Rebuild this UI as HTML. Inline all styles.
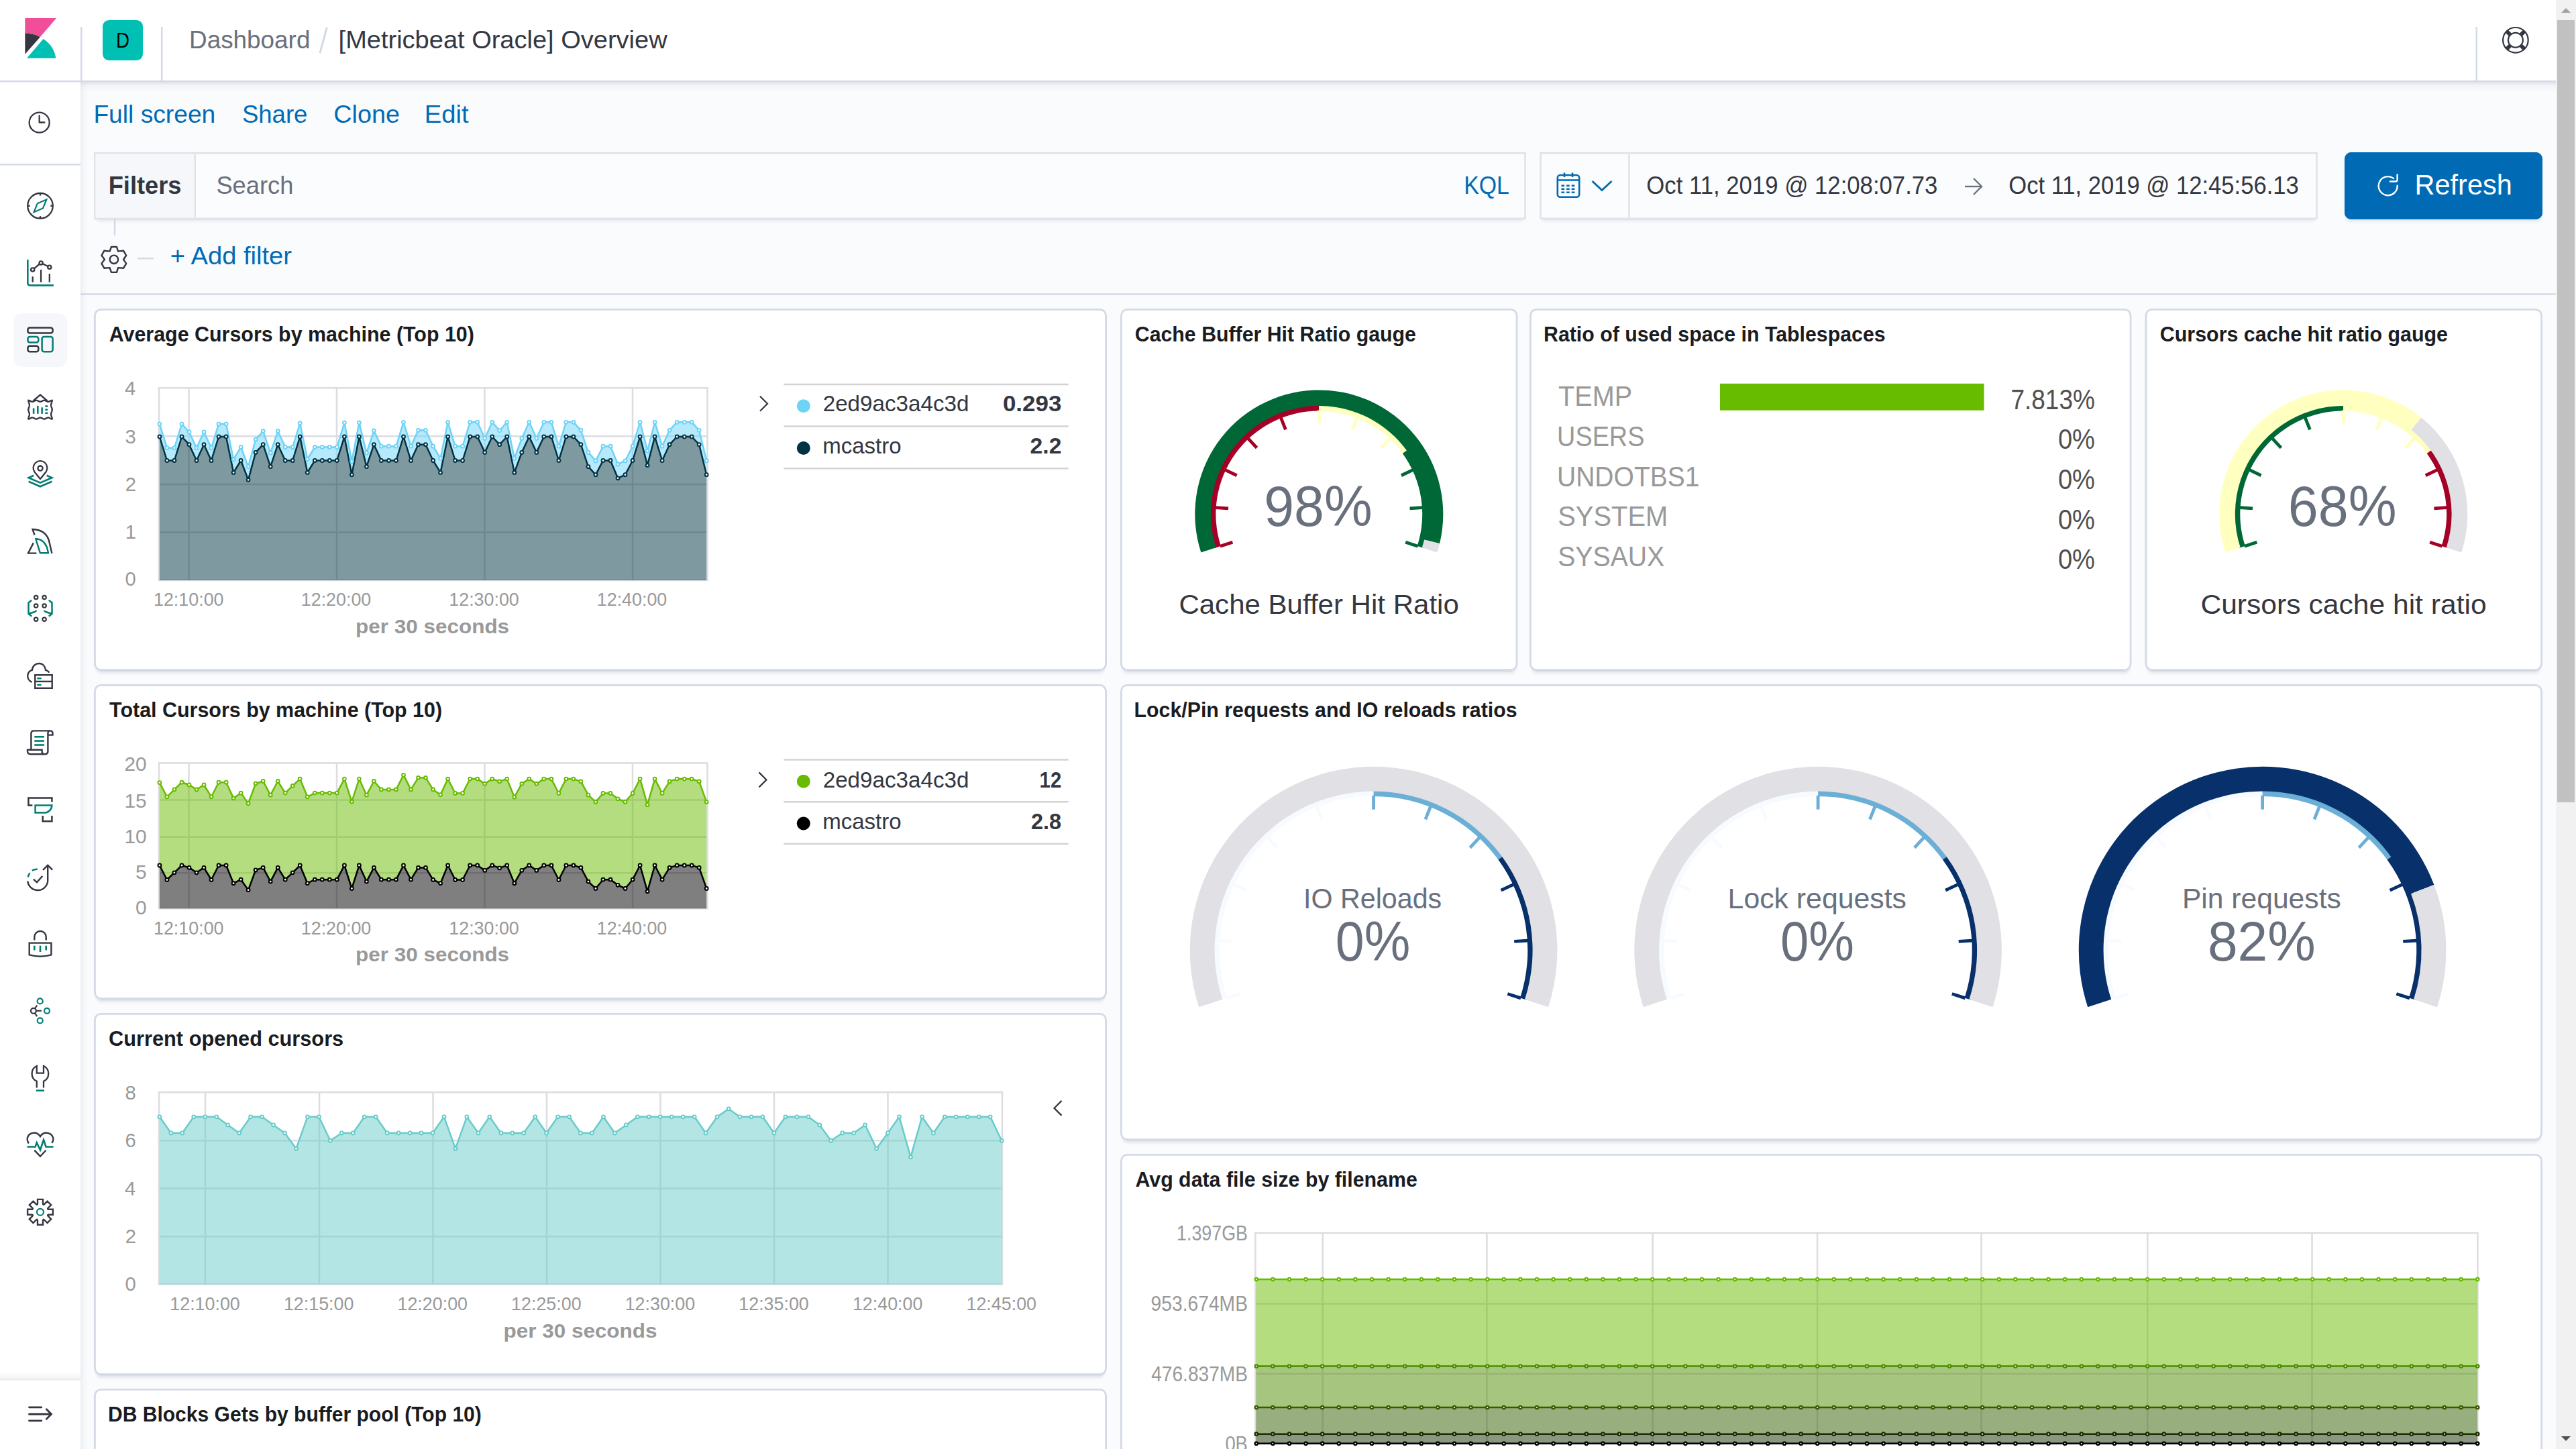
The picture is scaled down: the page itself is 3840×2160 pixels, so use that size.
<!DOCTYPE html>
<html><head><meta charset="utf-8"><title>[Metricbeat Oracle] Overview - Kibana</title>
<style>html,body{margin:0;padding:0;width:3840px;height:2160px;overflow:hidden;background:#FAFBFD}svg{display:block;position:absolute;left:0;top:0}.sh,.shf,.shb{position:absolute}.sh{border-radius:10px;background:#fff;box-shadow:0 2.5px 2.5px -2.5px rgba(152,162,179,.3),0 7.5px 5px -5px rgba(152,162,179,.3)}.shf{background:#FBFCFD;box-shadow:0 2.5px 2.5px -2.5px rgba(152,162,179,.2),0 7.5px 5px -5px rgba(152,162,179,.2)}.shb{border-radius:10px;background:#006BB4;box-shadow:0 5px 5px -2.5px rgba(152,162,179,.25)}text{font-family:"Liberation Sans",sans-serif}</style>
</head><body>
<div class="sh" style="left:140.00px;top:460.00px;width:1510.00px;height:540.00px"></div>
<div class="sh" style="left:1670.00px;top:460.00px;width:592.50px;height:540.00px"></div>
<div class="sh" style="left:2280.00px;top:460.00px;width:897.50px;height:540.00px"></div>
<div class="sh" style="left:3197.50px;top:460.00px;width:592.50px;height:540.00px"></div>
<div class="sh" style="left:140.00px;top:1020.00px;width:1510.00px;height:470.00px"></div>
<div class="sh" style="left:1670.00px;top:1020.00px;width:2120.00px;height:680.00px"></div>
<div class="sh" style="left:140.00px;top:1510.00px;width:1510.00px;height:540.00px"></div>
<div class="sh" style="left:1670.00px;top:1720.00px;width:2120.00px;height:680.00px"></div>
<div class="sh" style="left:140.00px;top:2070.00px;width:1510.00px;height:540.00px"></div>
<div class="shf" style="left:140px;top:227px;width:2134.7px;height:100px"></div>
<div class="shf" style="left:2295.25px;top:227px;width:1159.5px;height:100px"></div>
<div class="shb" style="left:3495px;top:227px;width:295px;height:100px"></div>
<svg xmlns="http://www.w3.org/2000/svg" width="3840" height="2160" viewBox="0 0 3840 2160">
<defs>
<filter id="pshadow" x="-5%" y="-5%" width="110%" height="115%"><feDropShadow dx="0" dy="4" stdDeviation="4" flood-color="#98A2B3" flood-opacity="0.22"/></filter>
<filter id="fshadow" x="-5%" y="-20%" width="110%" height="150%"><feDropShadow dx="0" dy="4" stdDeviation="2.5" flood-color="#98A2B3" flood-opacity="0.2"/></filter>
<filter id="hshadow" x="-5%" y="-20%" width="110%" height="160%"><feDropShadow dx="0" dy="6" stdDeviation="6" flood-color="#98A2B3" flood-opacity="0.2"/></filter>
<filter id="sshadow" x="-20%" y="-5%" width="160%" height="110%"><feDropShadow dx="6" dy="0" stdDeviation="6" flood-color="#98A2B3" flood-opacity="0.2"/></filter>
<linearGradient id="gshL" x1="0" y1="0" x2="1" y2="0"><stop offset="0" stop-color="#98A2B3" stop-opacity="0.2"/><stop offset="0.3" stop-color="#98A2B3" stop-opacity="0.07"/><stop offset="1" stop-color="#98A2B3" stop-opacity="0"/></linearGradient>
<linearGradient id="gshT" x1="0" y1="0" x2="0" y2="1"><stop offset="0" stop-color="#98A2B3" stop-opacity="0.3"/><stop offset="0.3" stop-color="#98A2B3" stop-opacity="0.1"/><stop offset="1" stop-color="#98A2B3" stop-opacity="0"/></linearGradient>
<linearGradient id="gshB" x1="0" y1="0" x2="0" y2="1"><stop offset="0" stop-color="#98A2B3" stop-opacity="0"/><stop offset="0.75" stop-color="#98A2B3" stop-opacity="0.1"/><stop offset="1" stop-color="#98A2B3" stop-opacity="0.25"/></linearGradient>
</defs>
<rect x="141.40" y="461.40" width="1507.20" height="537.20" rx="9" fill="#FFFFFF" stroke="#D3DAE6" stroke-width="2.8"/>
<text x="162.7" y="509.0" font-size="32.0" fill="#1A1C21" font-weight="bold" textLength="544.2" lengthAdjust="spacingAndGlyphs">Average Cursors by machine (Top 10)</text>
<rect x="1671.40" y="461.40" width="589.70" height="537.20" rx="9" fill="#FFFFFF" stroke="#D3DAE6" stroke-width="2.8"/>
<text x="1691.8" y="509.0" font-size="32.0" fill="#1A1C21" font-weight="bold" textLength="419.1" lengthAdjust="spacingAndGlyphs">Cache Buffer Hit Ratio gauge</text>
<rect x="2281.40" y="461.40" width="894.70" height="537.20" rx="9" fill="#FFFFFF" stroke="#D3DAE6" stroke-width="2.8"/>
<text x="2301.0" y="509.0" font-size="32.0" fill="#1A1C21" font-weight="bold" textLength="509.6" lengthAdjust="spacingAndGlyphs">Ratio of used space in Tablespaces</text>
<rect x="3198.90" y="461.40" width="589.70" height="537.20" rx="9" fill="#FFFFFF" stroke="#D3DAE6" stroke-width="2.8"/>
<text x="3219.8" y="509.0" font-size="32.0" fill="#1A1C21" font-weight="bold" textLength="429.2" lengthAdjust="spacingAndGlyphs">Cursors cache hit ratio gauge</text>
<rect x="141.40" y="1021.40" width="1507.20" height="467.20" rx="9" fill="#FFFFFF" stroke="#D3DAE6" stroke-width="2.8"/>
<text x="163.1" y="1069.0" font-size="32.0" fill="#1A1C21" font-weight="bold" textLength="496.0" lengthAdjust="spacingAndGlyphs">Total Cursors by machine (Top 10)</text>
<rect x="1671.40" y="1021.40" width="2117.20" height="677.20" rx="9" fill="#FFFFFF" stroke="#D3DAE6" stroke-width="2.8"/>
<text x="1690.5" y="1069.0" font-size="32.0" fill="#1A1C21" font-weight="bold" textLength="571.1" lengthAdjust="spacingAndGlyphs">Lock/Pin requests and IO reloads ratios</text>
<rect x="141.40" y="1511.40" width="1507.20" height="537.20" rx="9" fill="#FFFFFF" stroke="#D3DAE6" stroke-width="2.8"/>
<text x="162.1" y="1559.0" font-size="32.0" fill="#1A1C21" font-weight="bold" textLength="350.1" lengthAdjust="spacingAndGlyphs">Current opened cursors</text>
<rect x="1671.40" y="1721.40" width="2117.20" height="677.20" rx="9" fill="#FFFFFF" stroke="#D3DAE6" stroke-width="2.8"/>
<text x="1692.5" y="1769.0" font-size="32.0" fill="#1A1C21" font-weight="bold" textLength="420.3" lengthAdjust="spacingAndGlyphs">Avg data file size by filename</text>
<rect x="141.40" y="2071.40" width="1507.20" height="537.20" rx="9" fill="#FFFFFF" stroke="#D3DAE6" stroke-width="2.8"/>
<text x="161.0" y="2119.0" font-size="32.0" fill="#1A1C21" font-weight="bold" textLength="556.8" lengthAdjust="spacingAndGlyphs">DB Blocks Gets by buffer pool (Top 10)</text>
<line x1="237.0" y1="650.3" x2="1054.5" y2="650.3" stroke="#DCDCE1" stroke-width="2.5"/>
<line x1="237.0" y1="722.0" x2="1054.5" y2="722.0" stroke="#DCDCE1" stroke-width="2.5"/>
<line x1="237.0" y1="793.5" x2="1054.5" y2="793.5" stroke="#DCDCE1" stroke-width="2.5"/>
<line x1="281.5" y1="578.3" x2="281.5" y2="865.0" stroke="#DCDCE1" stroke-width="2.5"/>
<line x1="502.0" y1="578.3" x2="502.0" y2="865.0" stroke="#DCDCE1" stroke-width="2.5"/>
<line x1="722.5" y1="578.3" x2="722.5" y2="865.0" stroke="#DCDCE1" stroke-width="2.5"/>
<line x1="943.0" y1="578.3" x2="943.0" y2="865.0" stroke="#DCDCE1" stroke-width="2.5"/>
<rect x="237.0" y="578.3" width="817.5" height="286.7" fill="none" stroke="#DCDCE1" stroke-width="2.5"/>
<polygon points="237.9,651.0 248.9,686.5 259.9,686.5 271.0,651.0 282.0,662.7 293.0,686.5 304.0,662.7 315.0,686.5 326.0,651.0 337.1,651.0 348.1,704.4 359.1,686.5 370.1,715.3 381.1,674.4 392.2,662.7 403.2,695.6 414.2,662.7 425.2,686.5 436.2,686.5 447.2,651.0 458.3,704.4 469.3,686.5 480.3,686.5 491.3,686.5 502.3,686.5 513.4,651.0 524.4,707.7 535.4,651.0 546.4,695.6 557.4,662.7 568.4,686.5 579.5,686.5 590.5,686.5 601.5,651.0 612.5,686.5 623.5,662.7 634.5,662.7 645.6,686.5 656.6,704.4 667.6,651.0 678.6,686.5 689.6,686.5 700.7,651.0 711.7,651.0 722.7,674.4 733.7,651.0 744.7,662.7 755.7,651.0 766.8,704.4 777.8,674.4 788.8,651.0 799.8,674.4 810.8,651.0 821.9,651.0 832.9,686.5 843.9,651.0 854.9,651.0 865.9,662.7 876.9,695.6 888.0,707.7 899.0,686.5 910.0,686.5 921.0,712.8 932.0,707.7 943.1,686.5 954.1,651.0 965.1,693.6 976.1,651.0 987.1,686.5 998.1,662.7 1009.2,651.0 1020.2,651.0 1031.2,651.0 1042.2,662.7 1053.2,707.7 1053.2,865.0 237.9,865.0" fill="#003344" fill-opacity="0.5"/>
<polygon points="237.9,632.1 248.9,667.7 259.9,667.7 271.0,632.1 282.0,644.0 293.0,667.7 304.0,644.0 315.0,667.7 326.0,632.1 337.1,632.1 348.1,684.9 359.1,666.5 370.1,695.6 381.1,655.2 392.2,642.6 403.2,675.2 414.2,642.6 425.2,666.5 436.2,666.5 447.2,631.0 458.3,684.4 469.3,666.5 480.3,666.5 491.3,666.5 502.3,666.5 513.4,630.1 524.4,687.7 535.4,630.1 546.4,675.2 557.4,642.1 568.4,665.2 579.5,665.2 590.5,665.2 601.5,629.3 612.5,665.2 623.5,641.3 634.5,641.3 645.6,665.2 656.6,683.2 667.6,629.3 678.6,665.2 689.6,665.2 700.7,629.3 711.7,629.3 722.7,653.5 733.7,629.3 744.7,641.8 755.7,629.3 766.8,683.2 777.8,653.5 788.8,629.3 799.8,653.5 810.8,629.3 821.9,629.3 832.9,665.2 843.9,629.3 854.9,629.3 865.9,641.3 876.9,674.4 888.0,686.9 899.0,665.2 910.0,665.2 921.0,691.9 932.0,686.9 943.1,665.2 954.1,629.3 965.1,672.2 976.1,629.3 987.1,665.2 998.1,641.3 1009.2,629.3 1020.2,629.3 1031.2,629.3 1042.2,641.3 1053.2,686.9 1053.2,707.7 1042.2,662.7 1031.2,651.0 1020.2,651.0 1009.2,651.0 998.1,662.7 987.1,686.5 976.1,651.0 965.1,693.6 954.1,651.0 943.1,686.5 932.0,707.7 921.0,712.8 910.0,686.5 899.0,686.5 888.0,707.7 876.9,695.6 865.9,662.7 854.9,651.0 843.9,651.0 832.9,686.5 821.9,651.0 810.8,651.0 799.8,674.4 788.8,651.0 777.8,674.4 766.8,704.4 755.7,651.0 744.7,662.7 733.7,651.0 722.7,674.4 711.7,651.0 700.7,651.0 689.6,686.5 678.6,686.5 667.6,651.0 656.6,704.4 645.6,686.5 634.5,662.7 623.5,662.7 612.5,686.5 601.5,651.0 590.5,686.5 579.5,686.5 568.4,686.5 557.4,662.7 546.4,695.6 535.4,651.0 524.4,707.7 513.4,651.0 502.3,686.5 491.3,686.5 480.3,686.5 469.3,686.5 458.3,704.4 447.2,651.0 436.2,686.5 425.2,686.5 414.2,662.7 403.2,695.6 392.2,662.7 381.1,674.4 370.1,715.3 359.1,686.5 348.1,704.4 337.1,651.0 326.0,651.0 315.0,686.5 304.0,662.7 293.0,686.5 282.0,662.7 271.0,651.0 259.9,686.5 248.9,686.5 237.9,651.0" fill="#6DD3F7" fill-opacity="0.5"/>
<polyline points="237.9,632.1 248.9,667.7 259.9,667.7 271.0,632.1 282.0,644.0 293.0,667.7 304.0,644.0 315.0,667.7 326.0,632.1 337.1,632.1 348.1,684.9 359.1,666.5 370.1,695.6 381.1,655.2 392.2,642.6 403.2,675.2 414.2,642.6 425.2,666.5 436.2,666.5 447.2,631.0 458.3,684.4 469.3,666.5 480.3,666.5 491.3,666.5 502.3,666.5 513.4,630.1 524.4,687.7 535.4,630.1 546.4,675.2 557.4,642.1 568.4,665.2 579.5,665.2 590.5,665.2 601.5,629.3 612.5,665.2 623.5,641.3 634.5,641.3 645.6,665.2 656.6,683.2 667.6,629.3 678.6,665.2 689.6,665.2 700.7,629.3 711.7,629.3 722.7,653.5 733.7,629.3 744.7,641.8 755.7,629.3 766.8,683.2 777.8,653.5 788.8,629.3 799.8,653.5 810.8,629.3 821.9,629.3 832.9,665.2 843.9,629.3 854.9,629.3 865.9,641.3 876.9,674.4 888.0,686.9 899.0,665.2 910.0,665.2 921.0,691.9 932.0,686.9 943.1,665.2 954.1,629.3 965.1,672.2 976.1,629.3 987.1,665.2 998.1,641.3 1009.2,629.3 1020.2,629.3 1031.2,629.3 1042.2,641.3 1053.2,686.9" fill="none" stroke="#6DD3F7" stroke-width="2.5" stroke-linejoin="round"/>
<polyline points="237.9,651.0 248.9,686.5 259.9,686.5 271.0,651.0 282.0,662.7 293.0,686.5 304.0,662.7 315.0,686.5 326.0,651.0 337.1,651.0 348.1,704.4 359.1,686.5 370.1,715.3 381.1,674.4 392.2,662.7 403.2,695.6 414.2,662.7 425.2,686.5 436.2,686.5 447.2,651.0 458.3,704.4 469.3,686.5 480.3,686.5 491.3,686.5 502.3,686.5 513.4,651.0 524.4,707.7 535.4,651.0 546.4,695.6 557.4,662.7 568.4,686.5 579.5,686.5 590.5,686.5 601.5,651.0 612.5,686.5 623.5,662.7 634.5,662.7 645.6,686.5 656.6,704.4 667.6,651.0 678.6,686.5 689.6,686.5 700.7,651.0 711.7,651.0 722.7,674.4 733.7,651.0 744.7,662.7 755.7,651.0 766.8,704.4 777.8,674.4 788.8,651.0 799.8,674.4 810.8,651.0 821.9,651.0 832.9,686.5 843.9,651.0 854.9,651.0 865.9,662.7 876.9,695.6 888.0,707.7 899.0,686.5 910.0,686.5 921.0,712.8 932.0,707.7 943.1,686.5 954.1,651.0 965.1,693.6 976.1,651.0 987.1,686.5 998.1,662.7 1009.2,651.0 1020.2,651.0 1031.2,651.0 1042.2,662.7 1053.2,707.7" fill="none" stroke="#003344" stroke-width="2.5" stroke-linejoin="round"/>
<g fill="#FFFFFF" stroke="#6DD3F7" stroke-width="2.0"><circle cx="237.9" cy="632.1" r="2.4"/><circle cx="248.9" cy="667.7" r="2.4"/><circle cx="259.9" cy="667.7" r="2.4"/><circle cx="271.0" cy="632.1" r="2.4"/><circle cx="282.0" cy="644.0" r="2.4"/><circle cx="293.0" cy="667.7" r="2.4"/><circle cx="304.0" cy="644.0" r="2.4"/><circle cx="315.0" cy="667.7" r="2.4"/><circle cx="326.0" cy="632.1" r="2.4"/><circle cx="337.1" cy="632.1" r="2.4"/><circle cx="348.1" cy="684.9" r="2.4"/><circle cx="359.1" cy="666.5" r="2.4"/><circle cx="370.1" cy="695.6" r="2.4"/><circle cx="381.1" cy="655.2" r="2.4"/><circle cx="392.2" cy="642.6" r="2.4"/><circle cx="403.2" cy="675.2" r="2.4"/><circle cx="414.2" cy="642.6" r="2.4"/><circle cx="425.2" cy="666.5" r="2.4"/><circle cx="436.2" cy="666.5" r="2.4"/><circle cx="447.2" cy="631.0" r="2.4"/><circle cx="458.3" cy="684.4" r="2.4"/><circle cx="469.3" cy="666.5" r="2.4"/><circle cx="480.3" cy="666.5" r="2.4"/><circle cx="491.3" cy="666.5" r="2.4"/><circle cx="502.3" cy="666.5" r="2.4"/><circle cx="513.4" cy="630.1" r="2.4"/><circle cx="524.4" cy="687.7" r="2.4"/><circle cx="535.4" cy="630.1" r="2.4"/><circle cx="546.4" cy="675.2" r="2.4"/><circle cx="557.4" cy="642.1" r="2.4"/><circle cx="568.4" cy="665.2" r="2.4"/><circle cx="579.5" cy="665.2" r="2.4"/><circle cx="590.5" cy="665.2" r="2.4"/><circle cx="601.5" cy="629.3" r="2.4"/><circle cx="612.5" cy="665.2" r="2.4"/><circle cx="623.5" cy="641.3" r="2.4"/><circle cx="634.5" cy="641.3" r="2.4"/><circle cx="645.6" cy="665.2" r="2.4"/><circle cx="656.6" cy="683.2" r="2.4"/><circle cx="667.6" cy="629.3" r="2.4"/><circle cx="678.6" cy="665.2" r="2.4"/><circle cx="689.6" cy="665.2" r="2.4"/><circle cx="700.7" cy="629.3" r="2.4"/><circle cx="711.7" cy="629.3" r="2.4"/><circle cx="722.7" cy="653.5" r="2.4"/><circle cx="733.7" cy="629.3" r="2.4"/><circle cx="744.7" cy="641.8" r="2.4"/><circle cx="755.7" cy="629.3" r="2.4"/><circle cx="766.8" cy="683.2" r="2.4"/><circle cx="777.8" cy="653.5" r="2.4"/><circle cx="788.8" cy="629.3" r="2.4"/><circle cx="799.8" cy="653.5" r="2.4"/><circle cx="810.8" cy="629.3" r="2.4"/><circle cx="821.9" cy="629.3" r="2.4"/><circle cx="832.9" cy="665.2" r="2.4"/><circle cx="843.9" cy="629.3" r="2.4"/><circle cx="854.9" cy="629.3" r="2.4"/><circle cx="865.9" cy="641.3" r="2.4"/><circle cx="876.9" cy="674.4" r="2.4"/><circle cx="888.0" cy="686.9" r="2.4"/><circle cx="899.0" cy="665.2" r="2.4"/><circle cx="910.0" cy="665.2" r="2.4"/><circle cx="921.0" cy="691.9" r="2.4"/><circle cx="932.0" cy="686.9" r="2.4"/><circle cx="943.1" cy="665.2" r="2.4"/><circle cx="954.1" cy="629.3" r="2.4"/><circle cx="965.1" cy="672.2" r="2.4"/><circle cx="976.1" cy="629.3" r="2.4"/><circle cx="987.1" cy="665.2" r="2.4"/><circle cx="998.1" cy="641.3" r="2.4"/><circle cx="1009.2" cy="629.3" r="2.4"/><circle cx="1020.2" cy="629.3" r="2.4"/><circle cx="1031.2" cy="629.3" r="2.4"/><circle cx="1042.2" cy="641.3" r="2.4"/><circle cx="1053.2" cy="686.9" r="2.4"/></g>
<g fill="#FFFFFF" stroke="#003344" stroke-width="2.0"><circle cx="237.9" cy="651.0" r="2.4"/><circle cx="248.9" cy="686.5" r="2.4"/><circle cx="259.9" cy="686.5" r="2.4"/><circle cx="271.0" cy="651.0" r="2.4"/><circle cx="282.0" cy="662.7" r="2.4"/><circle cx="293.0" cy="686.5" r="2.4"/><circle cx="304.0" cy="662.7" r="2.4"/><circle cx="315.0" cy="686.5" r="2.4"/><circle cx="326.0" cy="651.0" r="2.4"/><circle cx="337.1" cy="651.0" r="2.4"/><circle cx="348.1" cy="704.4" r="2.4"/><circle cx="359.1" cy="686.5" r="2.4"/><circle cx="370.1" cy="715.3" r="2.4"/><circle cx="381.1" cy="674.4" r="2.4"/><circle cx="392.2" cy="662.7" r="2.4"/><circle cx="403.2" cy="695.6" r="2.4"/><circle cx="414.2" cy="662.7" r="2.4"/><circle cx="425.2" cy="686.5" r="2.4"/><circle cx="436.2" cy="686.5" r="2.4"/><circle cx="447.2" cy="651.0" r="2.4"/><circle cx="458.3" cy="704.4" r="2.4"/><circle cx="469.3" cy="686.5" r="2.4"/><circle cx="480.3" cy="686.5" r="2.4"/><circle cx="491.3" cy="686.5" r="2.4"/><circle cx="502.3" cy="686.5" r="2.4"/><circle cx="513.4" cy="651.0" r="2.4"/><circle cx="524.4" cy="707.7" r="2.4"/><circle cx="535.4" cy="651.0" r="2.4"/><circle cx="546.4" cy="695.6" r="2.4"/><circle cx="557.4" cy="662.7" r="2.4"/><circle cx="568.4" cy="686.5" r="2.4"/><circle cx="579.5" cy="686.5" r="2.4"/><circle cx="590.5" cy="686.5" r="2.4"/><circle cx="601.5" cy="651.0" r="2.4"/><circle cx="612.5" cy="686.5" r="2.4"/><circle cx="623.5" cy="662.7" r="2.4"/><circle cx="634.5" cy="662.7" r="2.4"/><circle cx="645.6" cy="686.5" r="2.4"/><circle cx="656.6" cy="704.4" r="2.4"/><circle cx="667.6" cy="651.0" r="2.4"/><circle cx="678.6" cy="686.5" r="2.4"/><circle cx="689.6" cy="686.5" r="2.4"/><circle cx="700.7" cy="651.0" r="2.4"/><circle cx="711.7" cy="651.0" r="2.4"/><circle cx="722.7" cy="674.4" r="2.4"/><circle cx="733.7" cy="651.0" r="2.4"/><circle cx="744.7" cy="662.7" r="2.4"/><circle cx="755.7" cy="651.0" r="2.4"/><circle cx="766.8" cy="704.4" r="2.4"/><circle cx="777.8" cy="674.4" r="2.4"/><circle cx="788.8" cy="651.0" r="2.4"/><circle cx="799.8" cy="674.4" r="2.4"/><circle cx="810.8" cy="651.0" r="2.4"/><circle cx="821.9" cy="651.0" r="2.4"/><circle cx="832.9" cy="686.5" r="2.4"/><circle cx="843.9" cy="651.0" r="2.4"/><circle cx="854.9" cy="651.0" r="2.4"/><circle cx="865.9" cy="662.7" r="2.4"/><circle cx="876.9" cy="695.6" r="2.4"/><circle cx="888.0" cy="707.7" r="2.4"/><circle cx="899.0" cy="686.5" r="2.4"/><circle cx="910.0" cy="686.5" r="2.4"/><circle cx="921.0" cy="712.8" r="2.4"/><circle cx="932.0" cy="707.7" r="2.4"/><circle cx="943.1" cy="686.5" r="2.4"/><circle cx="954.1" cy="651.0" r="2.4"/><circle cx="965.1" cy="693.6" r="2.4"/><circle cx="976.1" cy="651.0" r="2.4"/><circle cx="987.1" cy="686.5" r="2.4"/><circle cx="998.1" cy="662.7" r="2.4"/><circle cx="1009.2" cy="651.0" r="2.4"/><circle cx="1020.2" cy="651.0" r="2.4"/><circle cx="1031.2" cy="651.0" r="2.4"/><circle cx="1042.2" cy="662.7" r="2.4"/><circle cx="1053.2" cy="707.7" r="2.4"/></g>
<text x="186.1" y="589.0" font-size="29.1" fill="#999999" textLength="16.2" lengthAdjust="spacingAndGlyphs">4</text>
<text x="186.5" y="661.0" font-size="29.1" fill="#999999" textLength="16.2" lengthAdjust="spacingAndGlyphs">3</text>
<text x="186.7" y="732.0" font-size="29.1" fill="#999999" textLength="16.2" lengthAdjust="spacingAndGlyphs">2</text>
<text x="186.7" y="803.0" font-size="29.1" fill="#999999" textLength="16.2" lengthAdjust="spacingAndGlyphs">1</text>
<text x="186.4" y="873.0" font-size="29.1" fill="#999999" textLength="16.2" lengthAdjust="spacingAndGlyphs">0</text>
<text x="229.0" y="902.6" font-size="28.1" fill="#999999" textLength="104.5" lengthAdjust="spacingAndGlyphs">12:10:00</text>
<text x="448.8" y="902.6" font-size="28.1" fill="#999999" textLength="104.5" lengthAdjust="spacingAndGlyphs">12:20:00</text>
<text x="669.3" y="902.6" font-size="28.1" fill="#999999" textLength="104.5" lengthAdjust="spacingAndGlyphs">12:30:00</text>
<text x="889.8" y="902.6" font-size="28.1" fill="#999999" textLength="104.5" lengthAdjust="spacingAndGlyphs">12:40:00</text>
<text x="530.1" y="944.0" font-size="29.1" fill="#999999" font-weight="bold" textLength="229.0" lengthAdjust="spacingAndGlyphs">per 30 seconds</text>
<polyline points="1133.0,590.8 1144.0,601.8 1133.0,612.8" fill="none" stroke="#343741" stroke-width="2.2"/>
<line x1="1168.3" y1="572.9" x2="1592.7" y2="572.9" stroke="#D3D3D3" stroke-width="2.5"/>
<line x1="1168.3" y1="635.6" x2="1592.7" y2="635.6" stroke="#D3D3D3" stroke-width="2.5"/>
<line x1="1168.3" y1="698.3" x2="1592.7" y2="698.3" stroke="#D3D3D3" stroke-width="2.5"/>
<circle cx="1197.8" cy="605.2" r="10" fill="#6DD3F7"/>
<text x="1226.7" y="613.0" font-size="32.4" fill="#343741" textLength="217.8" lengthAdjust="spacingAndGlyphs">2ed9ac3a4c3d</text>
<text x="1494.9" y="613.0" font-size="32.4" fill="#343741" font-weight="bold" textLength="87.5" lengthAdjust="spacingAndGlyphs">0.293</text>
<circle cx="1197.8" cy="668.0" r="10" fill="#003344"/>
<text x="1226.2" y="675.7" font-size="32.4" fill="#343741" textLength="117.4" lengthAdjust="spacingAndGlyphs">mcastro</text>
<text x="1535.6" y="675.7" font-size="32.4" fill="#343741" font-weight="bold" textLength="46.9" lengthAdjust="spacingAndGlyphs">2.2</text>
<line x1="237.0" y1="1192.5" x2="1054.5" y2="1192.5" stroke="#DCDCE1" stroke-width="2.5"/>
<line x1="237.0" y1="1247.7" x2="1054.5" y2="1247.7" stroke="#DCDCE1" stroke-width="2.5"/>
<line x1="237.0" y1="1301.2" x2="1054.5" y2="1301.2" stroke="#DCDCE1" stroke-width="2.5"/>
<line x1="281.5" y1="1137.5" x2="281.5" y2="1354.3" stroke="#DCDCE1" stroke-width="2.5"/>
<line x1="502.0" y1="1137.5" x2="502.0" y2="1354.3" stroke="#DCDCE1" stroke-width="2.5"/>
<line x1="722.5" y1="1137.5" x2="722.5" y2="1354.3" stroke="#DCDCE1" stroke-width="2.5"/>
<line x1="943.0" y1="1137.5" x2="943.0" y2="1354.3" stroke="#DCDCE1" stroke-width="2.5"/>
<rect x="237.0" y="1137.5" width="817.5" height="216.8" fill="none" stroke="#DCDCE1" stroke-width="2.5"/>
<polygon points="237.9,1290.0 248.9,1311.5 259.9,1300.8 271.0,1290.0 282.0,1293.4 293.0,1300.8 304.0,1293.4 315.0,1311.5 326.0,1290.0 337.1,1290.0 348.1,1316.7 359.1,1311.2 370.1,1326.7 381.1,1296.9 392.2,1293.4 403.2,1314.1 414.2,1293.4 425.2,1311.2 436.2,1300.8 447.2,1290.0 458.3,1316.7 469.3,1311.2 480.3,1311.2 491.3,1311.2 502.3,1311.2 513.4,1290.0 524.4,1324.5 535.4,1290.0 546.4,1314.1 557.4,1293.4 568.4,1311.2 579.5,1311.2 590.5,1311.2 601.5,1290.0 612.5,1311.2 623.5,1293.4 634.5,1293.4 645.6,1311.5 656.6,1316.7 667.6,1290.0 678.6,1311.5 689.6,1311.5 700.7,1290.0 711.7,1290.0 722.7,1297.4 733.7,1290.0 744.7,1293.9 755.7,1290.0 766.8,1316.7 777.8,1297.4 788.8,1290.0 799.8,1297.4 810.8,1290.0 821.9,1290.0 832.9,1311.5 843.9,1290.0 854.9,1290.0 865.9,1293.4 876.9,1314.1 888.0,1324.5 899.0,1311.2 910.0,1311.2 921.0,1319.3 932.0,1324.5 943.1,1311.2 954.1,1290.0 965.1,1328.8 976.1,1290.0 987.1,1311.2 998.1,1293.4 1009.2,1290.0 1020.2,1290.0 1031.2,1290.0 1042.2,1293.4 1053.2,1324.5 1053.2,1354.3 237.9,1354.3" fill="#000000" fill-opacity="0.5"/>
<polygon points="237.9,1166.6 248.9,1187.8 259.9,1176.9 271.0,1166.2 282.0,1170.0 293.0,1176.9 304.0,1170.0 315.0,1187.8 326.0,1166.2 337.1,1166.2 348.1,1189.9 359.1,1182.1 370.1,1197.7 381.1,1168.0 392.2,1164.5 403.2,1185.2 414.2,1164.5 425.2,1182.1 436.2,1171.4 447.2,1161.1 458.3,1187.8 469.3,1182.1 480.3,1182.1 491.3,1182.1 502.3,1182.1 513.4,1161.1 524.4,1195.1 535.4,1161.1 546.4,1185.2 557.4,1164.5 568.4,1176.9 579.5,1176.9 590.5,1176.9 601.5,1155.4 612.5,1176.9 623.5,1159.3 634.5,1159.3 645.6,1176.9 656.6,1184.7 667.6,1161.1 678.6,1182.5 689.6,1182.5 700.7,1161.1 711.7,1161.1 722.7,1168.3 733.7,1161.1 744.7,1164.9 755.7,1161.1 766.8,1188.2 777.8,1168.3 788.8,1161.1 799.8,1168.3 810.8,1161.1 821.9,1161.1 832.9,1182.5 843.9,1161.1 854.9,1161.1 865.9,1164.9 876.9,1185.2 888.0,1195.4 899.0,1182.5 910.0,1182.5 921.0,1190.8 932.0,1195.4 943.1,1182.5 954.1,1161.1 965.1,1199.7 976.1,1161.1 987.1,1182.5 998.1,1164.9 1009.2,1161.1 1020.2,1161.1 1031.2,1161.1 1042.2,1164.9 1053.2,1195.4 1053.2,1324.5 1042.2,1293.4 1031.2,1290.0 1020.2,1290.0 1009.2,1290.0 998.1,1293.4 987.1,1311.2 976.1,1290.0 965.1,1328.8 954.1,1290.0 943.1,1311.2 932.0,1324.5 921.0,1319.3 910.0,1311.2 899.0,1311.2 888.0,1324.5 876.9,1314.1 865.9,1293.4 854.9,1290.0 843.9,1290.0 832.9,1311.5 821.9,1290.0 810.8,1290.0 799.8,1297.4 788.8,1290.0 777.8,1297.4 766.8,1316.7 755.7,1290.0 744.7,1293.9 733.7,1290.0 722.7,1297.4 711.7,1290.0 700.7,1290.0 689.6,1311.5 678.6,1311.5 667.6,1290.0 656.6,1316.7 645.6,1311.5 634.5,1293.4 623.5,1293.4 612.5,1311.2 601.5,1290.0 590.5,1311.2 579.5,1311.2 568.4,1311.2 557.4,1293.4 546.4,1314.1 535.4,1290.0 524.4,1324.5 513.4,1290.0 502.3,1311.2 491.3,1311.2 480.3,1311.2 469.3,1311.2 458.3,1316.7 447.2,1290.0 436.2,1300.8 425.2,1311.2 414.2,1293.4 403.2,1314.1 392.2,1293.4 381.1,1296.9 370.1,1326.7 359.1,1311.2 348.1,1316.7 337.1,1290.0 326.0,1290.0 315.0,1311.5 304.0,1293.4 293.0,1300.8 282.0,1293.4 271.0,1290.0 259.9,1300.8 248.9,1311.5 237.9,1290.0" fill="#68BC00" fill-opacity="0.5"/>
<polyline points="237.9,1166.6 248.9,1187.8 259.9,1176.9 271.0,1166.2 282.0,1170.0 293.0,1176.9 304.0,1170.0 315.0,1187.8 326.0,1166.2 337.1,1166.2 348.1,1189.9 359.1,1182.1 370.1,1197.7 381.1,1168.0 392.2,1164.5 403.2,1185.2 414.2,1164.5 425.2,1182.1 436.2,1171.4 447.2,1161.1 458.3,1187.8 469.3,1182.1 480.3,1182.1 491.3,1182.1 502.3,1182.1 513.4,1161.1 524.4,1195.1 535.4,1161.1 546.4,1185.2 557.4,1164.5 568.4,1176.9 579.5,1176.9 590.5,1176.9 601.5,1155.4 612.5,1176.9 623.5,1159.3 634.5,1159.3 645.6,1176.9 656.6,1184.7 667.6,1161.1 678.6,1182.5 689.6,1182.5 700.7,1161.1 711.7,1161.1 722.7,1168.3 733.7,1161.1 744.7,1164.9 755.7,1161.1 766.8,1188.2 777.8,1168.3 788.8,1161.1 799.8,1168.3 810.8,1161.1 821.9,1161.1 832.9,1182.5 843.9,1161.1 854.9,1161.1 865.9,1164.9 876.9,1185.2 888.0,1195.4 899.0,1182.5 910.0,1182.5 921.0,1190.8 932.0,1195.4 943.1,1182.5 954.1,1161.1 965.1,1199.7 976.1,1161.1 987.1,1182.5 998.1,1164.9 1009.2,1161.1 1020.2,1161.1 1031.2,1161.1 1042.2,1164.9 1053.2,1195.4" fill="none" stroke="#68BC00" stroke-width="2.5" stroke-linejoin="round"/>
<polyline points="237.9,1290.0 248.9,1311.5 259.9,1300.8 271.0,1290.0 282.0,1293.4 293.0,1300.8 304.0,1293.4 315.0,1311.5 326.0,1290.0 337.1,1290.0 348.1,1316.7 359.1,1311.2 370.1,1326.7 381.1,1296.9 392.2,1293.4 403.2,1314.1 414.2,1293.4 425.2,1311.2 436.2,1300.8 447.2,1290.0 458.3,1316.7 469.3,1311.2 480.3,1311.2 491.3,1311.2 502.3,1311.2 513.4,1290.0 524.4,1324.5 535.4,1290.0 546.4,1314.1 557.4,1293.4 568.4,1311.2 579.5,1311.2 590.5,1311.2 601.5,1290.0 612.5,1311.2 623.5,1293.4 634.5,1293.4 645.6,1311.5 656.6,1316.7 667.6,1290.0 678.6,1311.5 689.6,1311.5 700.7,1290.0 711.7,1290.0 722.7,1297.4 733.7,1290.0 744.7,1293.9 755.7,1290.0 766.8,1316.7 777.8,1297.4 788.8,1290.0 799.8,1297.4 810.8,1290.0 821.9,1290.0 832.9,1311.5 843.9,1290.0 854.9,1290.0 865.9,1293.4 876.9,1314.1 888.0,1324.5 899.0,1311.2 910.0,1311.2 921.0,1319.3 932.0,1324.5 943.1,1311.2 954.1,1290.0 965.1,1328.8 976.1,1290.0 987.1,1311.2 998.1,1293.4 1009.2,1290.0 1020.2,1290.0 1031.2,1290.0 1042.2,1293.4 1053.2,1324.5" fill="none" stroke="#000000" stroke-width="2.5" stroke-linejoin="round"/>
<g fill="#FFFFFF" stroke="#68BC00" stroke-width="2.0"><circle cx="237.9" cy="1166.6" r="2.4"/><circle cx="248.9" cy="1187.8" r="2.4"/><circle cx="259.9" cy="1176.9" r="2.4"/><circle cx="271.0" cy="1166.2" r="2.4"/><circle cx="282.0" cy="1170.0" r="2.4"/><circle cx="293.0" cy="1176.9" r="2.4"/><circle cx="304.0" cy="1170.0" r="2.4"/><circle cx="315.0" cy="1187.8" r="2.4"/><circle cx="326.0" cy="1166.2" r="2.4"/><circle cx="337.1" cy="1166.2" r="2.4"/><circle cx="348.1" cy="1189.9" r="2.4"/><circle cx="359.1" cy="1182.1" r="2.4"/><circle cx="370.1" cy="1197.7" r="2.4"/><circle cx="381.1" cy="1168.0" r="2.4"/><circle cx="392.2" cy="1164.5" r="2.4"/><circle cx="403.2" cy="1185.2" r="2.4"/><circle cx="414.2" cy="1164.5" r="2.4"/><circle cx="425.2" cy="1182.1" r="2.4"/><circle cx="436.2" cy="1171.4" r="2.4"/><circle cx="447.2" cy="1161.1" r="2.4"/><circle cx="458.3" cy="1187.8" r="2.4"/><circle cx="469.3" cy="1182.1" r="2.4"/><circle cx="480.3" cy="1182.1" r="2.4"/><circle cx="491.3" cy="1182.1" r="2.4"/><circle cx="502.3" cy="1182.1" r="2.4"/><circle cx="513.4" cy="1161.1" r="2.4"/><circle cx="524.4" cy="1195.1" r="2.4"/><circle cx="535.4" cy="1161.1" r="2.4"/><circle cx="546.4" cy="1185.2" r="2.4"/><circle cx="557.4" cy="1164.5" r="2.4"/><circle cx="568.4" cy="1176.9" r="2.4"/><circle cx="579.5" cy="1176.9" r="2.4"/><circle cx="590.5" cy="1176.9" r="2.4"/><circle cx="601.5" cy="1155.4" r="2.4"/><circle cx="612.5" cy="1176.9" r="2.4"/><circle cx="623.5" cy="1159.3" r="2.4"/><circle cx="634.5" cy="1159.3" r="2.4"/><circle cx="645.6" cy="1176.9" r="2.4"/><circle cx="656.6" cy="1184.7" r="2.4"/><circle cx="667.6" cy="1161.1" r="2.4"/><circle cx="678.6" cy="1182.5" r="2.4"/><circle cx="689.6" cy="1182.5" r="2.4"/><circle cx="700.7" cy="1161.1" r="2.4"/><circle cx="711.7" cy="1161.1" r="2.4"/><circle cx="722.7" cy="1168.3" r="2.4"/><circle cx="733.7" cy="1161.1" r="2.4"/><circle cx="744.7" cy="1164.9" r="2.4"/><circle cx="755.7" cy="1161.1" r="2.4"/><circle cx="766.8" cy="1188.2" r="2.4"/><circle cx="777.8" cy="1168.3" r="2.4"/><circle cx="788.8" cy="1161.1" r="2.4"/><circle cx="799.8" cy="1168.3" r="2.4"/><circle cx="810.8" cy="1161.1" r="2.4"/><circle cx="821.9" cy="1161.1" r="2.4"/><circle cx="832.9" cy="1182.5" r="2.4"/><circle cx="843.9" cy="1161.1" r="2.4"/><circle cx="854.9" cy="1161.1" r="2.4"/><circle cx="865.9" cy="1164.9" r="2.4"/><circle cx="876.9" cy="1185.2" r="2.4"/><circle cx="888.0" cy="1195.4" r="2.4"/><circle cx="899.0" cy="1182.5" r="2.4"/><circle cx="910.0" cy="1182.5" r="2.4"/><circle cx="921.0" cy="1190.8" r="2.4"/><circle cx="932.0" cy="1195.4" r="2.4"/><circle cx="943.1" cy="1182.5" r="2.4"/><circle cx="954.1" cy="1161.1" r="2.4"/><circle cx="965.1" cy="1199.7" r="2.4"/><circle cx="976.1" cy="1161.1" r="2.4"/><circle cx="987.1" cy="1182.5" r="2.4"/><circle cx="998.1" cy="1164.9" r="2.4"/><circle cx="1009.2" cy="1161.1" r="2.4"/><circle cx="1020.2" cy="1161.1" r="2.4"/><circle cx="1031.2" cy="1161.1" r="2.4"/><circle cx="1042.2" cy="1164.9" r="2.4"/><circle cx="1053.2" cy="1195.4" r="2.4"/></g>
<g fill="#FFFFFF" stroke="#000000" stroke-width="2.0"><circle cx="237.9" cy="1290.0" r="2.4"/><circle cx="248.9" cy="1311.5" r="2.4"/><circle cx="259.9" cy="1300.8" r="2.4"/><circle cx="271.0" cy="1290.0" r="2.4"/><circle cx="282.0" cy="1293.4" r="2.4"/><circle cx="293.0" cy="1300.8" r="2.4"/><circle cx="304.0" cy="1293.4" r="2.4"/><circle cx="315.0" cy="1311.5" r="2.4"/><circle cx="326.0" cy="1290.0" r="2.4"/><circle cx="337.1" cy="1290.0" r="2.4"/><circle cx="348.1" cy="1316.7" r="2.4"/><circle cx="359.1" cy="1311.2" r="2.4"/><circle cx="370.1" cy="1326.7" r="2.4"/><circle cx="381.1" cy="1296.9" r="2.4"/><circle cx="392.2" cy="1293.4" r="2.4"/><circle cx="403.2" cy="1314.1" r="2.4"/><circle cx="414.2" cy="1293.4" r="2.4"/><circle cx="425.2" cy="1311.2" r="2.4"/><circle cx="436.2" cy="1300.8" r="2.4"/><circle cx="447.2" cy="1290.0" r="2.4"/><circle cx="458.3" cy="1316.7" r="2.4"/><circle cx="469.3" cy="1311.2" r="2.4"/><circle cx="480.3" cy="1311.2" r="2.4"/><circle cx="491.3" cy="1311.2" r="2.4"/><circle cx="502.3" cy="1311.2" r="2.4"/><circle cx="513.4" cy="1290.0" r="2.4"/><circle cx="524.4" cy="1324.5" r="2.4"/><circle cx="535.4" cy="1290.0" r="2.4"/><circle cx="546.4" cy="1314.1" r="2.4"/><circle cx="557.4" cy="1293.4" r="2.4"/><circle cx="568.4" cy="1311.2" r="2.4"/><circle cx="579.5" cy="1311.2" r="2.4"/><circle cx="590.5" cy="1311.2" r="2.4"/><circle cx="601.5" cy="1290.0" r="2.4"/><circle cx="612.5" cy="1311.2" r="2.4"/><circle cx="623.5" cy="1293.4" r="2.4"/><circle cx="634.5" cy="1293.4" r="2.4"/><circle cx="645.6" cy="1311.5" r="2.4"/><circle cx="656.6" cy="1316.7" r="2.4"/><circle cx="667.6" cy="1290.0" r="2.4"/><circle cx="678.6" cy="1311.5" r="2.4"/><circle cx="689.6" cy="1311.5" r="2.4"/><circle cx="700.7" cy="1290.0" r="2.4"/><circle cx="711.7" cy="1290.0" r="2.4"/><circle cx="722.7" cy="1297.4" r="2.4"/><circle cx="733.7" cy="1290.0" r="2.4"/><circle cx="744.7" cy="1293.9" r="2.4"/><circle cx="755.7" cy="1290.0" r="2.4"/><circle cx="766.8" cy="1316.7" r="2.4"/><circle cx="777.8" cy="1297.4" r="2.4"/><circle cx="788.8" cy="1290.0" r="2.4"/><circle cx="799.8" cy="1297.4" r="2.4"/><circle cx="810.8" cy="1290.0" r="2.4"/><circle cx="821.9" cy="1290.0" r="2.4"/><circle cx="832.9" cy="1311.5" r="2.4"/><circle cx="843.9" cy="1290.0" r="2.4"/><circle cx="854.9" cy="1290.0" r="2.4"/><circle cx="865.9" cy="1293.4" r="2.4"/><circle cx="876.9" cy="1314.1" r="2.4"/><circle cx="888.0" cy="1324.5" r="2.4"/><circle cx="899.0" cy="1311.2" r="2.4"/><circle cx="910.0" cy="1311.2" r="2.4"/><circle cx="921.0" cy="1319.3" r="2.4"/><circle cx="932.0" cy="1324.5" r="2.4"/><circle cx="943.1" cy="1311.2" r="2.4"/><circle cx="954.1" cy="1290.0" r="2.4"/><circle cx="965.1" cy="1328.8" r="2.4"/><circle cx="976.1" cy="1290.0" r="2.4"/><circle cx="987.1" cy="1311.2" r="2.4"/><circle cx="998.1" cy="1293.4" r="2.4"/><circle cx="1009.2" cy="1290.0" r="2.4"/><circle cx="1020.2" cy="1290.0" r="2.4"/><circle cx="1031.2" cy="1290.0" r="2.4"/><circle cx="1042.2" cy="1293.4" r="2.4"/><circle cx="1053.2" cy="1324.5" r="2.4"/></g>
<text x="185.4" y="1149.2" font-size="29.8" fill="#999999" textLength="33.1" lengthAdjust="spacingAndGlyphs">20</text>
<text x="185.5" y="1204.2" font-size="29.8" fill="#999999" textLength="33.1" lengthAdjust="spacingAndGlyphs">15</text>
<text x="185.4" y="1257.2" font-size="29.8" fill="#999999" textLength="33.1" lengthAdjust="spacingAndGlyphs">10</text>
<text x="202.1" y="1310.2" font-size="29.8" fill="#999999" textLength="16.6" lengthAdjust="spacingAndGlyphs">5</text>
<text x="202.0" y="1363.2" font-size="29.8" fill="#999999" textLength="16.6" lengthAdjust="spacingAndGlyphs">0</text>
<text x="229.0" y="1393.4" font-size="28.1" fill="#999999" textLength="104.5" lengthAdjust="spacingAndGlyphs">12:10:00</text>
<text x="448.8" y="1393.4" font-size="28.1" fill="#999999" textLength="104.5" lengthAdjust="spacingAndGlyphs">12:20:00</text>
<text x="669.3" y="1393.4" font-size="28.1" fill="#999999" textLength="104.5" lengthAdjust="spacingAndGlyphs">12:30:00</text>
<text x="889.8" y="1393.4" font-size="28.1" fill="#999999" textLength="104.5" lengthAdjust="spacingAndGlyphs">12:40:00</text>
<text x="530.1" y="1433.0" font-size="29.1" fill="#999999" font-weight="bold" textLength="229.0" lengthAdjust="spacingAndGlyphs">per 30 seconds</text>
<polyline points="1131.5,1151.4 1142.5,1162.4 1131.5,1173.4" fill="none" stroke="#343741" stroke-width="2.2"/>
<line x1="1168.3" y1="1132.5" x2="1592.7" y2="1132.5" stroke="#D3D3D3" stroke-width="2.5"/>
<line x1="1168.3" y1="1195.2" x2="1592.7" y2="1195.2" stroke="#D3D3D3" stroke-width="2.5"/>
<line x1="1168.3" y1="1257.9" x2="1592.7" y2="1257.9" stroke="#D3D3D3" stroke-width="2.5"/>
<circle cx="1197.8" cy="1164.8" r="10" fill="#68BC00"/>
<text x="1226.7" y="1173.6" font-size="32.4" fill="#343741" textLength="217.8" lengthAdjust="spacingAndGlyphs">2ed9ac3a4c3d</text>
<text x="1549.6" y="1173.6" font-size="32.4" fill="#343741" font-weight="bold" textLength="32.7" lengthAdjust="spacingAndGlyphs">12</text>
<circle cx="1197.8" cy="1227.5" r="10" fill="#000000"/>
<text x="1226.2" y="1236.3" font-size="32.4" fill="#343741" textLength="117.4" lengthAdjust="spacingAndGlyphs">mcastro</text>
<text x="1536.9" y="1236.3" font-size="32.4" fill="#343741" font-weight="bold" textLength="45.3" lengthAdjust="spacingAndGlyphs">2.8</text>
<line x1="237.0" y1="1700.3" x2="1494.0" y2="1700.3" stroke="#DCDCE1" stroke-width="2.5"/>
<line x1="237.0" y1="1771.8" x2="1494.0" y2="1771.8" stroke="#DCDCE1" stroke-width="2.5"/>
<line x1="237.0" y1="1843.2" x2="1494.0" y2="1843.2" stroke="#DCDCE1" stroke-width="2.5"/>
<line x1="306.0" y1="1628.3" x2="306.0" y2="1914.5" stroke="#DCDCE1" stroke-width="2.5"/>
<line x1="476.0" y1="1628.3" x2="476.0" y2="1914.5" stroke="#DCDCE1" stroke-width="2.5"/>
<line x1="645.5" y1="1628.3" x2="645.5" y2="1914.5" stroke="#DCDCE1" stroke-width="2.5"/>
<line x1="815.0" y1="1628.3" x2="815.0" y2="1914.5" stroke="#DCDCE1" stroke-width="2.5"/>
<line x1="984.5" y1="1628.3" x2="984.5" y2="1914.5" stroke="#DCDCE1" stroke-width="2.5"/>
<line x1="1154.0" y1="1628.3" x2="1154.0" y2="1914.5" stroke="#DCDCE1" stroke-width="2.5"/>
<line x1="1323.5" y1="1628.3" x2="1323.5" y2="1914.5" stroke="#DCDCE1" stroke-width="2.5"/>
<rect x="237.0" y="1628.3" width="1257.0" height="286.2" fill="none" stroke="#DCDCE1" stroke-width="2.5"/>
<polygon points="237.9,1664.8 254.9,1689.0 271.8,1689.0 288.8,1664.8 305.8,1664.8 322.7,1664.8 339.7,1676.9 356.6,1689.0 373.6,1664.8 390.6,1664.8 407.5,1676.9 424.5,1689.0 441.5,1712.2 458.4,1664.8 475.4,1664.8 492.3,1700.3 509.3,1689.0 526.3,1689.0 543.2,1664.8 560.2,1664.8 577.2,1689.0 594.1,1689.0 611.1,1689.0 628.0,1689.0 645.0,1689.0 662.0,1664.8 678.9,1712.2 695.9,1664.8 712.9,1689.0 729.8,1664.8 746.8,1689.0 763.8,1689.0 780.7,1689.0 797.7,1664.8 814.6,1689.0 831.6,1664.8 848.6,1664.8 865.5,1689.0 882.5,1689.0 899.5,1664.8 916.4,1689.0 933.4,1676.9 950.3,1664.8 967.3,1664.8 984.3,1664.8 1001.2,1664.8 1018.2,1664.8 1035.2,1664.8 1052.1,1689.0 1069.1,1664.8 1086.1,1652.9 1103.0,1664.8 1120.0,1664.8 1136.9,1664.8 1153.9,1689.0 1170.9,1664.8 1187.8,1664.8 1204.8,1664.8 1221.8,1676.9 1238.7,1700.3 1255.7,1689.0 1272.6,1689.0 1289.6,1676.9 1306.6,1712.2 1323.5,1689.0 1340.5,1664.8 1357.5,1724.8 1374.4,1664.8 1391.4,1689.0 1408.3,1664.8 1425.3,1664.8 1442.3,1664.8 1459.2,1664.8 1476.2,1664.8 1493.2,1700.3 1493.2,1914.5 237.9,1914.5" fill="#68CCCA" fill-opacity="0.5"/>
<polyline points="237.9,1664.8 254.9,1689.0 271.8,1689.0 288.8,1664.8 305.8,1664.8 322.7,1664.8 339.7,1676.9 356.6,1689.0 373.6,1664.8 390.6,1664.8 407.5,1676.9 424.5,1689.0 441.5,1712.2 458.4,1664.8 475.4,1664.8 492.3,1700.3 509.3,1689.0 526.3,1689.0 543.2,1664.8 560.2,1664.8 577.2,1689.0 594.1,1689.0 611.1,1689.0 628.0,1689.0 645.0,1689.0 662.0,1664.8 678.9,1712.2 695.9,1664.8 712.9,1689.0 729.8,1664.8 746.8,1689.0 763.8,1689.0 780.7,1689.0 797.7,1664.8 814.6,1689.0 831.6,1664.8 848.6,1664.8 865.5,1689.0 882.5,1689.0 899.5,1664.8 916.4,1689.0 933.4,1676.9 950.3,1664.8 967.3,1664.8 984.3,1664.8 1001.2,1664.8 1018.2,1664.8 1035.2,1664.8 1052.1,1689.0 1069.1,1664.8 1086.1,1652.9 1103.0,1664.8 1120.0,1664.8 1136.9,1664.8 1153.9,1689.0 1170.9,1664.8 1187.8,1664.8 1204.8,1664.8 1221.8,1676.9 1238.7,1700.3 1255.7,1689.0 1272.6,1689.0 1289.6,1676.9 1306.6,1712.2 1323.5,1689.0 1340.5,1664.8 1357.5,1724.8 1374.4,1664.8 1391.4,1689.0 1408.3,1664.8 1425.3,1664.8 1442.3,1664.8 1459.2,1664.8 1476.2,1664.8 1493.2,1700.3" fill="none" stroke="#68CCCA" stroke-width="2.5" stroke-linejoin="round"/>
<g fill="#FFFFFF" stroke="#68CCCA" stroke-width="2.0"><circle cx="237.9" cy="1664.8" r="2.4"/><circle cx="254.9" cy="1689.0" r="2.4"/><circle cx="271.8" cy="1689.0" r="2.4"/><circle cx="288.8" cy="1664.8" r="2.4"/><circle cx="305.8" cy="1664.8" r="2.4"/><circle cx="322.7" cy="1664.8" r="2.4"/><circle cx="339.7" cy="1676.9" r="2.4"/><circle cx="356.6" cy="1689.0" r="2.4"/><circle cx="373.6" cy="1664.8" r="2.4"/><circle cx="390.6" cy="1664.8" r="2.4"/><circle cx="407.5" cy="1676.9" r="2.4"/><circle cx="424.5" cy="1689.0" r="2.4"/><circle cx="441.5" cy="1712.2" r="2.4"/><circle cx="458.4" cy="1664.8" r="2.4"/><circle cx="475.4" cy="1664.8" r="2.4"/><circle cx="492.3" cy="1700.3" r="2.4"/><circle cx="509.3" cy="1689.0" r="2.4"/><circle cx="526.3" cy="1689.0" r="2.4"/><circle cx="543.2" cy="1664.8" r="2.4"/><circle cx="560.2" cy="1664.8" r="2.4"/><circle cx="577.2" cy="1689.0" r="2.4"/><circle cx="594.1" cy="1689.0" r="2.4"/><circle cx="611.1" cy="1689.0" r="2.4"/><circle cx="628.0" cy="1689.0" r="2.4"/><circle cx="645.0" cy="1689.0" r="2.4"/><circle cx="662.0" cy="1664.8" r="2.4"/><circle cx="678.9" cy="1712.2" r="2.4"/><circle cx="695.9" cy="1664.8" r="2.4"/><circle cx="712.9" cy="1689.0" r="2.4"/><circle cx="729.8" cy="1664.8" r="2.4"/><circle cx="746.8" cy="1689.0" r="2.4"/><circle cx="763.8" cy="1689.0" r="2.4"/><circle cx="780.7" cy="1689.0" r="2.4"/><circle cx="797.7" cy="1664.8" r="2.4"/><circle cx="814.6" cy="1689.0" r="2.4"/><circle cx="831.6" cy="1664.8" r="2.4"/><circle cx="848.6" cy="1664.8" r="2.4"/><circle cx="865.5" cy="1689.0" r="2.4"/><circle cx="882.5" cy="1689.0" r="2.4"/><circle cx="899.5" cy="1664.8" r="2.4"/><circle cx="916.4" cy="1689.0" r="2.4"/><circle cx="933.4" cy="1676.9" r="2.4"/><circle cx="950.3" cy="1664.8" r="2.4"/><circle cx="967.3" cy="1664.8" r="2.4"/><circle cx="984.3" cy="1664.8" r="2.4"/><circle cx="1001.2" cy="1664.8" r="2.4"/><circle cx="1018.2" cy="1664.8" r="2.4"/><circle cx="1035.2" cy="1664.8" r="2.4"/><circle cx="1052.1" cy="1689.0" r="2.4"/><circle cx="1069.1" cy="1664.8" r="2.4"/><circle cx="1086.1" cy="1652.9" r="2.4"/><circle cx="1103.0" cy="1664.8" r="2.4"/><circle cx="1120.0" cy="1664.8" r="2.4"/><circle cx="1136.9" cy="1664.8" r="2.4"/><circle cx="1153.9" cy="1689.0" r="2.4"/><circle cx="1170.9" cy="1664.8" r="2.4"/><circle cx="1187.8" cy="1664.8" r="2.4"/><circle cx="1204.8" cy="1664.8" r="2.4"/><circle cx="1221.8" cy="1676.9" r="2.4"/><circle cx="1238.7" cy="1700.3" r="2.4"/><circle cx="1255.7" cy="1689.0" r="2.4"/><circle cx="1272.6" cy="1689.0" r="2.4"/><circle cx="1289.6" cy="1676.9" r="2.4"/><circle cx="1306.6" cy="1712.2" r="2.4"/><circle cx="1323.5" cy="1689.0" r="2.4"/><circle cx="1340.5" cy="1664.8" r="2.4"/><circle cx="1357.5" cy="1724.8" r="2.4"/><circle cx="1374.4" cy="1664.8" r="2.4"/><circle cx="1391.4" cy="1689.0" r="2.4"/><circle cx="1408.3" cy="1664.8" r="2.4"/><circle cx="1425.3" cy="1664.8" r="2.4"/><circle cx="1442.3" cy="1664.8" r="2.4"/><circle cx="1459.2" cy="1664.8" r="2.4"/><circle cx="1476.2" cy="1664.8" r="2.4"/><circle cx="1493.2" cy="1700.3" r="2.4"/></g>
<text x="186.5" y="1639.0" font-size="29.1" fill="#999999" textLength="16.2" lengthAdjust="spacingAndGlyphs">8</text>
<text x="186.5" y="1710.0" font-size="29.1" fill="#999999" textLength="16.2" lengthAdjust="spacingAndGlyphs">6</text>
<text x="186.1" y="1781.5" font-size="29.1" fill="#999999" textLength="16.2" lengthAdjust="spacingAndGlyphs">4</text>
<text x="186.7" y="1853.0" font-size="29.1" fill="#999999" textLength="16.2" lengthAdjust="spacingAndGlyphs">2</text>
<text x="186.4" y="1924.0" font-size="29.1" fill="#999999" textLength="16.2" lengthAdjust="spacingAndGlyphs">0</text>
<text x="253.3" y="1952.6" font-size="28.1" fill="#999999" textLength="104.5" lengthAdjust="spacingAndGlyphs">12:10:00</text>
<text x="422.9" y="1952.6" font-size="28.1" fill="#999999" textLength="104.5" lengthAdjust="spacingAndGlyphs">12:15:00</text>
<text x="592.5" y="1952.6" font-size="28.1" fill="#999999" textLength="104.5" lengthAdjust="spacingAndGlyphs">12:20:00</text>
<text x="762.1" y="1952.6" font-size="28.1" fill="#999999" textLength="104.5" lengthAdjust="spacingAndGlyphs">12:25:00</text>
<text x="931.7" y="1952.6" font-size="28.1" fill="#999999" textLength="104.5" lengthAdjust="spacingAndGlyphs">12:30:00</text>
<text x="1101.3" y="1952.6" font-size="28.1" fill="#999999" textLength="104.5" lengthAdjust="spacingAndGlyphs">12:35:00</text>
<text x="1270.9" y="1952.6" font-size="28.1" fill="#999999" textLength="104.5" lengthAdjust="spacingAndGlyphs">12:40:00</text>
<text x="1440.5" y="1952.6" font-size="28.1" fill="#999999" textLength="104.5" lengthAdjust="spacingAndGlyphs">12:45:00</text>
<text x="750.5" y="1993.6" font-size="29.1" fill="#999999" font-weight="bold" textLength="229.0" lengthAdjust="spacingAndGlyphs">per 30 seconds</text>
<polyline points="1582.5,1640.9 1571.5,1651.9 1582.5,1662.9" fill="none" stroke="#343741" stroke-width="2.2"/>
<line x1="1871.4" y1="1943.4" x2="3693.4" y2="1943.4" stroke="#DCDCE1" stroke-width="2.5"/>
<line x1="1871.4" y1="2048.0" x2="3693.4" y2="2048.0" stroke="#DCDCE1" stroke-width="2.5"/>
<line x1="1971.7" y1="1838.0" x2="1971.7" y2="2152.8" stroke="#DCDCE1" stroke-width="2.5"/>
<line x1="2216.4" y1="1838.0" x2="2216.4" y2="2152.8" stroke="#DCDCE1" stroke-width="2.5"/>
<line x1="2463.6" y1="1838.0" x2="2463.6" y2="2152.8" stroke="#DCDCE1" stroke-width="2.5"/>
<line x1="2709.1" y1="1838.0" x2="2709.1" y2="2152.8" stroke="#DCDCE1" stroke-width="2.5"/>
<line x1="2953.5" y1="1838.0" x2="2953.5" y2="2152.8" stroke="#DCDCE1" stroke-width="2.5"/>
<line x1="3201.3" y1="1838.0" x2="3201.3" y2="2152.8" stroke="#DCDCE1" stroke-width="2.5"/>
<line x1="3446.5" y1="1838.0" x2="3446.5" y2="2152.8" stroke="#DCDCE1" stroke-width="2.5"/>
<rect x="1871.4" y="1838.0" width="1822.0" height="314.8" fill="none" stroke="#DCDCE1" stroke-width="2.5"/>
<rect x="1872.3" y="1907.1" width="1820.7" height="129.4" fill="#68BC00" fill-opacity="0.5"/>
<rect x="1872.3" y="2036.5" width="1820.7" height="61.5" fill="#4E8D00" fill-opacity="0.5"/>
<rect x="1872.3" y="2098.0" width="1820.7" height="39.7" fill="#345E00" fill-opacity="0.5"/>
<rect x="1872.3" y="2137.7" width="1820.7" height="14.1" fill="#1A2F00" fill-opacity="0.5"/>
<rect x="1872.3" y="2151.8" width="1820.7" height="1.0" fill="#000000" fill-opacity="0.5"/>
<polyline points="1872.8,1907.1 3693.2,1907.1" fill="none" stroke="#68BC00" stroke-width="2.5" stroke-linejoin="round"/>
<g fill="#FFFFFF" stroke="#68BC00" stroke-width="2.3"><circle cx="1872.8" cy="1907.1" r="2.2"/><circle cx="1897.4" cy="1907.1" r="2.2"/><circle cx="1922.0" cy="1907.1" r="2.2"/><circle cx="1946.6" cy="1907.1" r="2.2"/><circle cx="1971.2" cy="1907.1" r="2.2"/><circle cx="1995.8" cy="1907.1" r="2.2"/><circle cx="2020.4" cy="1907.1" r="2.2"/><circle cx="2045.0" cy="1907.1" r="2.2"/><circle cx="2069.6" cy="1907.1" r="2.2"/><circle cx="2094.2" cy="1907.1" r="2.2"/><circle cx="2118.8" cy="1907.1" r="2.2"/><circle cx="2143.4" cy="1907.1" r="2.2"/><circle cx="2168.0" cy="1907.1" r="2.2"/><circle cx="2192.6" cy="1907.1" r="2.2"/><circle cx="2217.2" cy="1907.1" r="2.2"/><circle cx="2241.8" cy="1907.1" r="2.2"/><circle cx="2266.4" cy="1907.1" r="2.2"/><circle cx="2291.0" cy="1907.1" r="2.2"/><circle cx="2315.6" cy="1907.1" r="2.2"/><circle cx="2340.2" cy="1907.1" r="2.2"/><circle cx="2364.8" cy="1907.1" r="2.2"/><circle cx="2389.4" cy="1907.1" r="2.2"/><circle cx="2414.0" cy="1907.1" r="2.2"/><circle cx="2438.6" cy="1907.1" r="2.2"/><circle cx="2463.2" cy="1907.1" r="2.2"/><circle cx="2487.8" cy="1907.1" r="2.2"/><circle cx="2512.4" cy="1907.1" r="2.2"/><circle cx="2537.0" cy="1907.1" r="2.2"/><circle cx="2561.6" cy="1907.1" r="2.2"/><circle cx="2586.2" cy="1907.1" r="2.2"/><circle cx="2610.8" cy="1907.1" r="2.2"/><circle cx="2635.4" cy="1907.1" r="2.2"/><circle cx="2660.0" cy="1907.1" r="2.2"/><circle cx="2684.6" cy="1907.1" r="2.2"/><circle cx="2709.2" cy="1907.1" r="2.2"/><circle cx="2733.8" cy="1907.1" r="2.2"/><circle cx="2758.4" cy="1907.1" r="2.2"/><circle cx="2783.0" cy="1907.1" r="2.2"/><circle cx="2807.6" cy="1907.1" r="2.2"/><circle cx="2832.2" cy="1907.1" r="2.2"/><circle cx="2856.8" cy="1907.1" r="2.2"/><circle cx="2881.4" cy="1907.1" r="2.2"/><circle cx="2906.0" cy="1907.1" r="2.2"/><circle cx="2930.6" cy="1907.1" r="2.2"/><circle cx="2955.2" cy="1907.1" r="2.2"/><circle cx="2979.8" cy="1907.1" r="2.2"/><circle cx="3004.4" cy="1907.1" r="2.2"/><circle cx="3029.0" cy="1907.1" r="2.2"/><circle cx="3053.6" cy="1907.1" r="2.2"/><circle cx="3078.2" cy="1907.1" r="2.2"/><circle cx="3102.8" cy="1907.1" r="2.2"/><circle cx="3127.4" cy="1907.1" r="2.2"/><circle cx="3152.0" cy="1907.1" r="2.2"/><circle cx="3176.6" cy="1907.1" r="2.2"/><circle cx="3201.2" cy="1907.1" r="2.2"/><circle cx="3225.8" cy="1907.1" r="2.2"/><circle cx="3250.4" cy="1907.1" r="2.2"/><circle cx="3275.0" cy="1907.1" r="2.2"/><circle cx="3299.6" cy="1907.1" r="2.2"/><circle cx="3324.2" cy="1907.1" r="2.2"/><circle cx="3348.8" cy="1907.1" r="2.2"/><circle cx="3373.4" cy="1907.1" r="2.2"/><circle cx="3398.0" cy="1907.1" r="2.2"/><circle cx="3422.6" cy="1907.1" r="2.2"/><circle cx="3447.2" cy="1907.1" r="2.2"/><circle cx="3471.8" cy="1907.1" r="2.2"/><circle cx="3496.4" cy="1907.1" r="2.2"/><circle cx="3521.0" cy="1907.1" r="2.2"/><circle cx="3545.6" cy="1907.1" r="2.2"/><circle cx="3570.2" cy="1907.1" r="2.2"/><circle cx="3594.8" cy="1907.1" r="2.2"/><circle cx="3619.4" cy="1907.1" r="2.2"/><circle cx="3644.0" cy="1907.1" r="2.2"/><circle cx="3668.6" cy="1907.1" r="2.2"/><circle cx="3693.2" cy="1907.1" r="2.2"/></g>
<polyline points="1872.8,2036.5 3693.2,2036.5" fill="none" stroke="#4E8D00" stroke-width="2.5" stroke-linejoin="round"/>
<g fill="#FFFFFF" stroke="#4E8D00" stroke-width="2.3"><circle cx="1872.8" cy="2036.5" r="2.2"/><circle cx="1897.4" cy="2036.5" r="2.2"/><circle cx="1922.0" cy="2036.5" r="2.2"/><circle cx="1946.6" cy="2036.5" r="2.2"/><circle cx="1971.2" cy="2036.5" r="2.2"/><circle cx="1995.8" cy="2036.5" r="2.2"/><circle cx="2020.4" cy="2036.5" r="2.2"/><circle cx="2045.0" cy="2036.5" r="2.2"/><circle cx="2069.6" cy="2036.5" r="2.2"/><circle cx="2094.2" cy="2036.5" r="2.2"/><circle cx="2118.8" cy="2036.5" r="2.2"/><circle cx="2143.4" cy="2036.5" r="2.2"/><circle cx="2168.0" cy="2036.5" r="2.2"/><circle cx="2192.6" cy="2036.5" r="2.2"/><circle cx="2217.2" cy="2036.5" r="2.2"/><circle cx="2241.8" cy="2036.5" r="2.2"/><circle cx="2266.4" cy="2036.5" r="2.2"/><circle cx="2291.0" cy="2036.5" r="2.2"/><circle cx="2315.6" cy="2036.5" r="2.2"/><circle cx="2340.2" cy="2036.5" r="2.2"/><circle cx="2364.8" cy="2036.5" r="2.2"/><circle cx="2389.4" cy="2036.5" r="2.2"/><circle cx="2414.0" cy="2036.5" r="2.2"/><circle cx="2438.6" cy="2036.5" r="2.2"/><circle cx="2463.2" cy="2036.5" r="2.2"/><circle cx="2487.8" cy="2036.5" r="2.2"/><circle cx="2512.4" cy="2036.5" r="2.2"/><circle cx="2537.0" cy="2036.5" r="2.2"/><circle cx="2561.6" cy="2036.5" r="2.2"/><circle cx="2586.2" cy="2036.5" r="2.2"/><circle cx="2610.8" cy="2036.5" r="2.2"/><circle cx="2635.4" cy="2036.5" r="2.2"/><circle cx="2660.0" cy="2036.5" r="2.2"/><circle cx="2684.6" cy="2036.5" r="2.2"/><circle cx="2709.2" cy="2036.5" r="2.2"/><circle cx="2733.8" cy="2036.5" r="2.2"/><circle cx="2758.4" cy="2036.5" r="2.2"/><circle cx="2783.0" cy="2036.5" r="2.2"/><circle cx="2807.6" cy="2036.5" r="2.2"/><circle cx="2832.2" cy="2036.5" r="2.2"/><circle cx="2856.8" cy="2036.5" r="2.2"/><circle cx="2881.4" cy="2036.5" r="2.2"/><circle cx="2906.0" cy="2036.5" r="2.2"/><circle cx="2930.6" cy="2036.5" r="2.2"/><circle cx="2955.2" cy="2036.5" r="2.2"/><circle cx="2979.8" cy="2036.5" r="2.2"/><circle cx="3004.4" cy="2036.5" r="2.2"/><circle cx="3029.0" cy="2036.5" r="2.2"/><circle cx="3053.6" cy="2036.5" r="2.2"/><circle cx="3078.2" cy="2036.5" r="2.2"/><circle cx="3102.8" cy="2036.5" r="2.2"/><circle cx="3127.4" cy="2036.5" r="2.2"/><circle cx="3152.0" cy="2036.5" r="2.2"/><circle cx="3176.6" cy="2036.5" r="2.2"/><circle cx="3201.2" cy="2036.5" r="2.2"/><circle cx="3225.8" cy="2036.5" r="2.2"/><circle cx="3250.4" cy="2036.5" r="2.2"/><circle cx="3275.0" cy="2036.5" r="2.2"/><circle cx="3299.6" cy="2036.5" r="2.2"/><circle cx="3324.2" cy="2036.5" r="2.2"/><circle cx="3348.8" cy="2036.5" r="2.2"/><circle cx="3373.4" cy="2036.5" r="2.2"/><circle cx="3398.0" cy="2036.5" r="2.2"/><circle cx="3422.6" cy="2036.5" r="2.2"/><circle cx="3447.2" cy="2036.5" r="2.2"/><circle cx="3471.8" cy="2036.5" r="2.2"/><circle cx="3496.4" cy="2036.5" r="2.2"/><circle cx="3521.0" cy="2036.5" r="2.2"/><circle cx="3545.6" cy="2036.5" r="2.2"/><circle cx="3570.2" cy="2036.5" r="2.2"/><circle cx="3594.8" cy="2036.5" r="2.2"/><circle cx="3619.4" cy="2036.5" r="2.2"/><circle cx="3644.0" cy="2036.5" r="2.2"/><circle cx="3668.6" cy="2036.5" r="2.2"/><circle cx="3693.2" cy="2036.5" r="2.2"/></g>
<polyline points="1872.8,2098.0 3693.2,2098.0" fill="none" stroke="#345E00" stroke-width="2.5" stroke-linejoin="round"/>
<g fill="#FFFFFF" stroke="#345E00" stroke-width="2.3"><circle cx="1872.8" cy="2098.0" r="2.2"/><circle cx="1897.4" cy="2098.0" r="2.2"/><circle cx="1922.0" cy="2098.0" r="2.2"/><circle cx="1946.6" cy="2098.0" r="2.2"/><circle cx="1971.2" cy="2098.0" r="2.2"/><circle cx="1995.8" cy="2098.0" r="2.2"/><circle cx="2020.4" cy="2098.0" r="2.2"/><circle cx="2045.0" cy="2098.0" r="2.2"/><circle cx="2069.6" cy="2098.0" r="2.2"/><circle cx="2094.2" cy="2098.0" r="2.2"/><circle cx="2118.8" cy="2098.0" r="2.2"/><circle cx="2143.4" cy="2098.0" r="2.2"/><circle cx="2168.0" cy="2098.0" r="2.2"/><circle cx="2192.6" cy="2098.0" r="2.2"/><circle cx="2217.2" cy="2098.0" r="2.2"/><circle cx="2241.8" cy="2098.0" r="2.2"/><circle cx="2266.4" cy="2098.0" r="2.2"/><circle cx="2291.0" cy="2098.0" r="2.2"/><circle cx="2315.6" cy="2098.0" r="2.2"/><circle cx="2340.2" cy="2098.0" r="2.2"/><circle cx="2364.8" cy="2098.0" r="2.2"/><circle cx="2389.4" cy="2098.0" r="2.2"/><circle cx="2414.0" cy="2098.0" r="2.2"/><circle cx="2438.6" cy="2098.0" r="2.2"/><circle cx="2463.2" cy="2098.0" r="2.2"/><circle cx="2487.8" cy="2098.0" r="2.2"/><circle cx="2512.4" cy="2098.0" r="2.2"/><circle cx="2537.0" cy="2098.0" r="2.2"/><circle cx="2561.6" cy="2098.0" r="2.2"/><circle cx="2586.2" cy="2098.0" r="2.2"/><circle cx="2610.8" cy="2098.0" r="2.2"/><circle cx="2635.4" cy="2098.0" r="2.2"/><circle cx="2660.0" cy="2098.0" r="2.2"/><circle cx="2684.6" cy="2098.0" r="2.2"/><circle cx="2709.2" cy="2098.0" r="2.2"/><circle cx="2733.8" cy="2098.0" r="2.2"/><circle cx="2758.4" cy="2098.0" r="2.2"/><circle cx="2783.0" cy="2098.0" r="2.2"/><circle cx="2807.6" cy="2098.0" r="2.2"/><circle cx="2832.2" cy="2098.0" r="2.2"/><circle cx="2856.8" cy="2098.0" r="2.2"/><circle cx="2881.4" cy="2098.0" r="2.2"/><circle cx="2906.0" cy="2098.0" r="2.2"/><circle cx="2930.6" cy="2098.0" r="2.2"/><circle cx="2955.2" cy="2098.0" r="2.2"/><circle cx="2979.8" cy="2098.0" r="2.2"/><circle cx="3004.4" cy="2098.0" r="2.2"/><circle cx="3029.0" cy="2098.0" r="2.2"/><circle cx="3053.6" cy="2098.0" r="2.2"/><circle cx="3078.2" cy="2098.0" r="2.2"/><circle cx="3102.8" cy="2098.0" r="2.2"/><circle cx="3127.4" cy="2098.0" r="2.2"/><circle cx="3152.0" cy="2098.0" r="2.2"/><circle cx="3176.6" cy="2098.0" r="2.2"/><circle cx="3201.2" cy="2098.0" r="2.2"/><circle cx="3225.8" cy="2098.0" r="2.2"/><circle cx="3250.4" cy="2098.0" r="2.2"/><circle cx="3275.0" cy="2098.0" r="2.2"/><circle cx="3299.6" cy="2098.0" r="2.2"/><circle cx="3324.2" cy="2098.0" r="2.2"/><circle cx="3348.8" cy="2098.0" r="2.2"/><circle cx="3373.4" cy="2098.0" r="2.2"/><circle cx="3398.0" cy="2098.0" r="2.2"/><circle cx="3422.6" cy="2098.0" r="2.2"/><circle cx="3447.2" cy="2098.0" r="2.2"/><circle cx="3471.8" cy="2098.0" r="2.2"/><circle cx="3496.4" cy="2098.0" r="2.2"/><circle cx="3521.0" cy="2098.0" r="2.2"/><circle cx="3545.6" cy="2098.0" r="2.2"/><circle cx="3570.2" cy="2098.0" r="2.2"/><circle cx="3594.8" cy="2098.0" r="2.2"/><circle cx="3619.4" cy="2098.0" r="2.2"/><circle cx="3644.0" cy="2098.0" r="2.2"/><circle cx="3668.6" cy="2098.0" r="2.2"/><circle cx="3693.2" cy="2098.0" r="2.2"/></g>
<polyline points="1872.8,2137.7 3693.2,2137.7" fill="none" stroke="#1A2F00" stroke-width="2.5" stroke-linejoin="round"/>
<g fill="#FFFFFF" stroke="#1A2F00" stroke-width="2.3"><circle cx="1872.8" cy="2137.7" r="2.2"/><circle cx="1897.4" cy="2137.7" r="2.2"/><circle cx="1922.0" cy="2137.7" r="2.2"/><circle cx="1946.6" cy="2137.7" r="2.2"/><circle cx="1971.2" cy="2137.7" r="2.2"/><circle cx="1995.8" cy="2137.7" r="2.2"/><circle cx="2020.4" cy="2137.7" r="2.2"/><circle cx="2045.0" cy="2137.7" r="2.2"/><circle cx="2069.6" cy="2137.7" r="2.2"/><circle cx="2094.2" cy="2137.7" r="2.2"/><circle cx="2118.8" cy="2137.7" r="2.2"/><circle cx="2143.4" cy="2137.7" r="2.2"/><circle cx="2168.0" cy="2137.7" r="2.2"/><circle cx="2192.6" cy="2137.7" r="2.2"/><circle cx="2217.2" cy="2137.7" r="2.2"/><circle cx="2241.8" cy="2137.7" r="2.2"/><circle cx="2266.4" cy="2137.7" r="2.2"/><circle cx="2291.0" cy="2137.7" r="2.2"/><circle cx="2315.6" cy="2137.7" r="2.2"/><circle cx="2340.2" cy="2137.7" r="2.2"/><circle cx="2364.8" cy="2137.7" r="2.2"/><circle cx="2389.4" cy="2137.7" r="2.2"/><circle cx="2414.0" cy="2137.7" r="2.2"/><circle cx="2438.6" cy="2137.7" r="2.2"/><circle cx="2463.2" cy="2137.7" r="2.2"/><circle cx="2487.8" cy="2137.7" r="2.2"/><circle cx="2512.4" cy="2137.7" r="2.2"/><circle cx="2537.0" cy="2137.7" r="2.2"/><circle cx="2561.6" cy="2137.7" r="2.2"/><circle cx="2586.2" cy="2137.7" r="2.2"/><circle cx="2610.8" cy="2137.7" r="2.2"/><circle cx="2635.4" cy="2137.7" r="2.2"/><circle cx="2660.0" cy="2137.7" r="2.2"/><circle cx="2684.6" cy="2137.7" r="2.2"/><circle cx="2709.2" cy="2137.7" r="2.2"/><circle cx="2733.8" cy="2137.7" r="2.2"/><circle cx="2758.4" cy="2137.7" r="2.2"/><circle cx="2783.0" cy="2137.7" r="2.2"/><circle cx="2807.6" cy="2137.7" r="2.2"/><circle cx="2832.2" cy="2137.7" r="2.2"/><circle cx="2856.8" cy="2137.7" r="2.2"/><circle cx="2881.4" cy="2137.7" r="2.2"/><circle cx="2906.0" cy="2137.7" r="2.2"/><circle cx="2930.6" cy="2137.7" r="2.2"/><circle cx="2955.2" cy="2137.7" r="2.2"/><circle cx="2979.8" cy="2137.7" r="2.2"/><circle cx="3004.4" cy="2137.7" r="2.2"/><circle cx="3029.0" cy="2137.7" r="2.2"/><circle cx="3053.6" cy="2137.7" r="2.2"/><circle cx="3078.2" cy="2137.7" r="2.2"/><circle cx="3102.8" cy="2137.7" r="2.2"/><circle cx="3127.4" cy="2137.7" r="2.2"/><circle cx="3152.0" cy="2137.7" r="2.2"/><circle cx="3176.6" cy="2137.7" r="2.2"/><circle cx="3201.2" cy="2137.7" r="2.2"/><circle cx="3225.8" cy="2137.7" r="2.2"/><circle cx="3250.4" cy="2137.7" r="2.2"/><circle cx="3275.0" cy="2137.7" r="2.2"/><circle cx="3299.6" cy="2137.7" r="2.2"/><circle cx="3324.2" cy="2137.7" r="2.2"/><circle cx="3348.8" cy="2137.7" r="2.2"/><circle cx="3373.4" cy="2137.7" r="2.2"/><circle cx="3398.0" cy="2137.7" r="2.2"/><circle cx="3422.6" cy="2137.7" r="2.2"/><circle cx="3447.2" cy="2137.7" r="2.2"/><circle cx="3471.8" cy="2137.7" r="2.2"/><circle cx="3496.4" cy="2137.7" r="2.2"/><circle cx="3521.0" cy="2137.7" r="2.2"/><circle cx="3545.6" cy="2137.7" r="2.2"/><circle cx="3570.2" cy="2137.7" r="2.2"/><circle cx="3594.8" cy="2137.7" r="2.2"/><circle cx="3619.4" cy="2137.7" r="2.2"/><circle cx="3644.0" cy="2137.7" r="2.2"/><circle cx="3668.6" cy="2137.7" r="2.2"/><circle cx="3693.2" cy="2137.7" r="2.2"/></g>
<polyline points="1872.8,2151.8 3693.2,2151.8" fill="none" stroke="#000000" stroke-width="2.5" stroke-linejoin="round"/>
<g fill="#FFFFFF" stroke="#000000" stroke-width="2.3"><circle cx="1872.8" cy="2151.8" r="2.2"/><circle cx="1897.4" cy="2151.8" r="2.2"/><circle cx="1922.0" cy="2151.8" r="2.2"/><circle cx="1946.6" cy="2151.8" r="2.2"/><circle cx="1971.2" cy="2151.8" r="2.2"/><circle cx="1995.8" cy="2151.8" r="2.2"/><circle cx="2020.4" cy="2151.8" r="2.2"/><circle cx="2045.0" cy="2151.8" r="2.2"/><circle cx="2069.6" cy="2151.8" r="2.2"/><circle cx="2094.2" cy="2151.8" r="2.2"/><circle cx="2118.8" cy="2151.8" r="2.2"/><circle cx="2143.4" cy="2151.8" r="2.2"/><circle cx="2168.0" cy="2151.8" r="2.2"/><circle cx="2192.6" cy="2151.8" r="2.2"/><circle cx="2217.2" cy="2151.8" r="2.2"/><circle cx="2241.8" cy="2151.8" r="2.2"/><circle cx="2266.4" cy="2151.8" r="2.2"/><circle cx="2291.0" cy="2151.8" r="2.2"/><circle cx="2315.6" cy="2151.8" r="2.2"/><circle cx="2340.2" cy="2151.8" r="2.2"/><circle cx="2364.8" cy="2151.8" r="2.2"/><circle cx="2389.4" cy="2151.8" r="2.2"/><circle cx="2414.0" cy="2151.8" r="2.2"/><circle cx="2438.6" cy="2151.8" r="2.2"/><circle cx="2463.2" cy="2151.8" r="2.2"/><circle cx="2487.8" cy="2151.8" r="2.2"/><circle cx="2512.4" cy="2151.8" r="2.2"/><circle cx="2537.0" cy="2151.8" r="2.2"/><circle cx="2561.6" cy="2151.8" r="2.2"/><circle cx="2586.2" cy="2151.8" r="2.2"/><circle cx="2610.8" cy="2151.8" r="2.2"/><circle cx="2635.4" cy="2151.8" r="2.2"/><circle cx="2660.0" cy="2151.8" r="2.2"/><circle cx="2684.6" cy="2151.8" r="2.2"/><circle cx="2709.2" cy="2151.8" r="2.2"/><circle cx="2733.8" cy="2151.8" r="2.2"/><circle cx="2758.4" cy="2151.8" r="2.2"/><circle cx="2783.0" cy="2151.8" r="2.2"/><circle cx="2807.6" cy="2151.8" r="2.2"/><circle cx="2832.2" cy="2151.8" r="2.2"/><circle cx="2856.8" cy="2151.8" r="2.2"/><circle cx="2881.4" cy="2151.8" r="2.2"/><circle cx="2906.0" cy="2151.8" r="2.2"/><circle cx="2930.6" cy="2151.8" r="2.2"/><circle cx="2955.2" cy="2151.8" r="2.2"/><circle cx="2979.8" cy="2151.8" r="2.2"/><circle cx="3004.4" cy="2151.8" r="2.2"/><circle cx="3029.0" cy="2151.8" r="2.2"/><circle cx="3053.6" cy="2151.8" r="2.2"/><circle cx="3078.2" cy="2151.8" r="2.2"/><circle cx="3102.8" cy="2151.8" r="2.2"/><circle cx="3127.4" cy="2151.8" r="2.2"/><circle cx="3152.0" cy="2151.8" r="2.2"/><circle cx="3176.6" cy="2151.8" r="2.2"/><circle cx="3201.2" cy="2151.8" r="2.2"/><circle cx="3225.8" cy="2151.8" r="2.2"/><circle cx="3250.4" cy="2151.8" r="2.2"/><circle cx="3275.0" cy="2151.8" r="2.2"/><circle cx="3299.6" cy="2151.8" r="2.2"/><circle cx="3324.2" cy="2151.8" r="2.2"/><circle cx="3348.8" cy="2151.8" r="2.2"/><circle cx="3373.4" cy="2151.8" r="2.2"/><circle cx="3398.0" cy="2151.8" r="2.2"/><circle cx="3422.6" cy="2151.8" r="2.2"/><circle cx="3447.2" cy="2151.8" r="2.2"/><circle cx="3471.8" cy="2151.8" r="2.2"/><circle cx="3496.4" cy="2151.8" r="2.2"/><circle cx="3521.0" cy="2151.8" r="2.2"/><circle cx="3545.6" cy="2151.8" r="2.2"/><circle cx="3570.2" cy="2151.8" r="2.2"/><circle cx="3594.8" cy="2151.8" r="2.2"/><circle cx="3619.4" cy="2151.8" r="2.2"/><circle cx="3644.0" cy="2151.8" r="2.2"/><circle cx="3668.6" cy="2151.8" r="2.2"/><circle cx="3693.2" cy="2151.8" r="2.2"/></g>
<text x="1754.0" y="1849.4" font-size="31.0" fill="#999999" textLength="106.0" lengthAdjust="spacingAndGlyphs">1.397GB</text>
<text x="1715.5" y="1954.0" font-size="31.0" fill="#999999" textLength="144.5" lengthAdjust="spacingAndGlyphs">953.674MB</text>
<text x="1716.2" y="2058.6" font-size="31.0" fill="#999999" textLength="143.8" lengthAdjust="spacingAndGlyphs">476.837MB</text>
<text x="1826.4" y="2163.2" font-size="31.0" fill="#999999" textLength="33.5" lengthAdjust="spacingAndGlyphs">0B</text>
<path d="M1809.95,817.20 A164.4,164.4 0 0 1 1966.30,602.00 L1966.30,612.50 A153.9,153.9 0 0 0 1819.93,813.96 Z" fill="#A50026"/>
<path d="M1966.30,602.00 A164.4,164.4 0 0 1 2099.30,669.77 L2090.81,675.94 A153.9,153.9 0 0 0 1966.30,612.50 Z" fill="#FFFFBF"/>
<path d="M2099.30,669.77 A164.4,164.4 0 0 1 2122.65,817.20 L2112.67,813.96 A153.9,153.9 0 0 0 2090.81,675.94 Z" fill="#006837"/>
<path d="M1790.35,823.57 A185,185 0 1 1 2146.05,810.15 L2123.12,804.57 A161.4,161.4 0 1 0 1812.80,816.28 Z" fill="#006837"/>
<path d="M2146.05,810.15 A185,185 0 0 1 2142.25,823.57 L2119.80,816.28 A161.4,161.4 0 0 0 2123.12,804.57 Z" fill="#E0E0E5"/>
<line x1="1818.98" y1="814.27" x2="1837.43" y2="808.27" stroke="#A50026" stroke-width="4.8"/>
<line x1="1811.71" y1="756.67" x2="1831.07" y2="757.89" stroke="#A50026" stroke-width="4.8"/>
<line x1="1826.14" y1="700.45" x2="1843.70" y2="708.71" stroke="#A50026" stroke-width="4.8"/>
<line x1="1860.26" y1="653.48" x2="1873.54" y2="667.62" stroke="#A50026" stroke-width="4.8"/>
<line x1="1909.28" y1="622.38" x2="1916.42" y2="640.42" stroke="#A50026" stroke-width="4.8"/>
<line x1="1966.30" y1="611.50" x2="1966.30" y2="630.90" stroke="#FFFFBF" stroke-width="4.8"/>
<line x1="2023.32" y1="622.38" x2="2016.18" y2="640.42" stroke="#FFFFBF" stroke-width="4.8"/>
<line x1="2072.34" y1="653.48" x2="2059.06" y2="667.62" stroke="#FFFFBF" stroke-width="4.8"/>
<line x1="2106.46" y1="700.45" x2="2088.90" y2="708.71" stroke="#006837" stroke-width="4.8"/>
<line x1="2120.89" y1="756.67" x2="2101.53" y2="757.89" stroke="#006837" stroke-width="4.8"/>
<line x1="2113.62" y1="814.27" x2="2095.17" y2="808.27" stroke="#006837" stroke-width="4.8"/>
<text x="1884.2" y="783.5" font-size="85.8" fill="#69707D" textLength="161.4" lengthAdjust="spacingAndGlyphs">98%</text>
<text x="1757.4" y="915.4" font-size="39.8" fill="#343741" textLength="417.4" lengthAdjust="spacingAndGlyphs">Cache Buffer Hit Ratio</text>
<path d="M3336.85,817.20 A164.4,164.4 0 0 1 3493.20,602.00 L3493.20,612.50 A153.9,153.9 0 0 0 3346.83,813.96 Z" fill="#006837"/>
<path d="M3493.20,602.00 A164.4,164.4 0 0 1 3626.20,669.77 L3617.71,675.94 A153.9,153.9 0 0 0 3493.20,612.50 Z" fill="#FFFFBF"/>
<path d="M3626.20,669.77 A164.4,164.4 0 0 1 3649.55,817.20 L3639.57,813.96 A153.9,153.9 0 0 0 3617.71,675.94 Z" fill="#A50026"/>
<path d="M3317.25,823.57 A185,185 0 0 1 3609.32,622.38 L3594.51,640.76 A161.4,161.4 0 0 0 3339.70,816.28 Z" fill="#FFFFBF"/>
<path d="M3609.32,622.38 A185,185 0 0 1 3669.15,823.57 L3646.70,816.28 A161.4,161.4 0 0 0 3594.51,640.76 Z" fill="#E0E0E5"/>
<line x1="3345.88" y1="814.27" x2="3364.33" y2="808.27" stroke="#006837" stroke-width="4.8"/>
<line x1="3338.61" y1="756.67" x2="3357.97" y2="757.89" stroke="#006837" stroke-width="4.8"/>
<line x1="3353.04" y1="700.45" x2="3370.60" y2="708.71" stroke="#006837" stroke-width="4.8"/>
<line x1="3387.16" y1="653.48" x2="3400.44" y2="667.62" stroke="#006837" stroke-width="4.8"/>
<line x1="3436.18" y1="622.38" x2="3443.32" y2="640.42" stroke="#006837" stroke-width="4.8"/>
<line x1="3493.20" y1="611.50" x2="3493.20" y2="630.90" stroke="#FFFFBF" stroke-width="4.8"/>
<line x1="3550.22" y1="622.38" x2="3543.08" y2="640.42" stroke="#FFFFBF" stroke-width="4.8"/>
<line x1="3599.24" y1="653.48" x2="3585.96" y2="667.62" stroke="#FFFFBF" stroke-width="4.8"/>
<line x1="3633.36" y1="700.45" x2="3615.80" y2="708.71" stroke="#A50026" stroke-width="4.8"/>
<line x1="3647.79" y1="756.67" x2="3628.43" y2="757.89" stroke="#A50026" stroke-width="4.8"/>
<line x1="3640.52" y1="814.27" x2="3622.07" y2="808.27" stroke="#A50026" stroke-width="4.8"/>
<text x="3410.8" y="783.5" font-size="85.8" fill="#69707D" textLength="161.7" lengthAdjust="spacingAndGlyphs">68%</text>
<text x="3280.4" y="915.4" font-size="39.8" fill="#343741" textLength="426.3" lengthAdjust="spacingAndGlyphs">Cursors cache hit ratio</text>
<path d="M1819.35,1490.76 A240.0,240.0 0 0 1 2047.60,1176.60 L2047.60,1186.90 A229.7,229.7 0 0 0 1829.14,1487.58 Z" fill="#F7FBFF"/>
<path d="M2047.60,1176.60 A240.0,240.0 0 0 1 2241.76,1275.53 L2233.43,1281.59 A229.7,229.7 0 0 0 2047.60,1186.90 Z" fill="#6BAED6"/>
<path d="M2241.76,1275.53 A240.0,240.0 0 0 1 2275.85,1490.76 L2266.06,1487.58 A229.7,229.7 0 0 0 2233.43,1281.59 Z" fill="#08306B"/>
<path d="M1787.20,1501.21 A273.8,273.8 0 0 1 1787.20,1501.21 L1822.20,1489.84 A237.0,237.0 0 0 0 1822.20,1489.84 Z" fill="#08306B"/>
<path d="M1787.20,1501.21 A273.8,273.8 0 1 1 2308.00,1501.21 L2273.00,1489.84 A237.0,237.0 0 1 0 1822.20,1489.84 Z" fill="#E0E0E5"/>
<line x1="1828.19" y1="1487.89" x2="1847.88" y2="1481.49" stroke="#F7FBFF" stroke-width="4.8"/>
<line x1="1817.36" y1="1402.11" x2="1838.01" y2="1403.41" stroke="#F7FBFF" stroke-width="4.8"/>
<line x1="1838.86" y1="1318.37" x2="1857.59" y2="1327.19" stroke="#F7FBFF" stroke-width="4.8"/>
<line x1="1889.67" y1="1248.43" x2="1903.85" y2="1263.52" stroke="#F7FBFF" stroke-width="4.8"/>
<line x1="1962.67" y1="1202.10" x2="1970.29" y2="1221.35" stroke="#F7FBFF" stroke-width="4.8"/>
<line x1="2047.60" y1="1185.90" x2="2047.60" y2="1206.60" stroke="#6BAED6" stroke-width="4.8"/>
<line x1="2132.53" y1="1202.10" x2="2124.91" y2="1221.35" stroke="#6BAED6" stroke-width="4.8"/>
<line x1="2205.53" y1="1248.43" x2="2191.35" y2="1263.52" stroke="#6BAED6" stroke-width="4.8"/>
<line x1="2256.34" y1="1318.37" x2="2237.61" y2="1327.19" stroke="#08306B" stroke-width="4.8"/>
<line x1="2277.84" y1="1402.11" x2="2257.19" y2="1403.41" stroke="#08306B" stroke-width="4.8"/>
<line x1="2267.01" y1="1487.89" x2="2247.32" y2="1481.49" stroke="#08306B" stroke-width="4.8"/>
<text x="1943.1" y="1354.1" font-size="42.2" fill="#69707D" textLength="206.1" lengthAdjust="spacingAndGlyphs">IO Reloads</text>
<text x="1990.8" y="1432.2" font-size="83.9" fill="#69707D" textLength="111.4" lengthAdjust="spacingAndGlyphs">0%</text>
<path d="M2481.85,1490.76 A240.0,240.0 0 0 1 2710.10,1176.60 L2710.10,1186.90 A229.7,229.7 0 0 0 2491.64,1487.58 Z" fill="#F7FBFF"/>
<path d="M2710.10,1176.60 A240.0,240.0 0 0 1 2904.26,1275.53 L2895.93,1281.59 A229.7,229.7 0 0 0 2710.10,1186.90 Z" fill="#6BAED6"/>
<path d="M2904.26,1275.53 A240.0,240.0 0 0 1 2938.35,1490.76 L2928.56,1487.58 A229.7,229.7 0 0 0 2895.93,1281.59 Z" fill="#08306B"/>
<path d="M2449.70,1501.21 A273.8,273.8 0 0 1 2449.70,1501.21 L2484.70,1489.84 A237.0,237.0 0 0 0 2484.70,1489.84 Z" fill="#08306B"/>
<path d="M2449.70,1501.21 A273.8,273.8 0 1 1 2970.50,1501.21 L2935.50,1489.84 A237.0,237.0 0 1 0 2484.70,1489.84 Z" fill="#E0E0E5"/>
<line x1="2490.69" y1="1487.89" x2="2510.38" y2="1481.49" stroke="#F7FBFF" stroke-width="4.8"/>
<line x1="2479.86" y1="1402.11" x2="2500.51" y2="1403.41" stroke="#F7FBFF" stroke-width="4.8"/>
<line x1="2501.36" y1="1318.37" x2="2520.09" y2="1327.19" stroke="#F7FBFF" stroke-width="4.8"/>
<line x1="2552.17" y1="1248.43" x2="2566.35" y2="1263.52" stroke="#F7FBFF" stroke-width="4.8"/>
<line x1="2625.17" y1="1202.10" x2="2632.79" y2="1221.35" stroke="#F7FBFF" stroke-width="4.8"/>
<line x1="2710.10" y1="1185.90" x2="2710.10" y2="1206.60" stroke="#6BAED6" stroke-width="4.8"/>
<line x1="2795.03" y1="1202.10" x2="2787.41" y2="1221.35" stroke="#6BAED6" stroke-width="4.8"/>
<line x1="2868.03" y1="1248.43" x2="2853.85" y2="1263.52" stroke="#6BAED6" stroke-width="4.8"/>
<line x1="2918.84" y1="1318.37" x2="2900.11" y2="1327.19" stroke="#08306B" stroke-width="4.8"/>
<line x1="2940.34" y1="1402.11" x2="2919.69" y2="1403.41" stroke="#08306B" stroke-width="4.8"/>
<line x1="2929.51" y1="1487.89" x2="2909.82" y2="1481.49" stroke="#08306B" stroke-width="4.8"/>
<text x="2575.6" y="1354.1" font-size="42.2" fill="#69707D" textLength="266.4" lengthAdjust="spacingAndGlyphs">Lock requests</text>
<text x="2654.0" y="1432.2" font-size="83.9" fill="#69707D" textLength="110.0" lengthAdjust="spacingAndGlyphs">0%</text>
<path d="M3144.35,1490.76 A240.0,240.0 0 0 1 3372.60,1176.60 L3372.60,1186.90 A229.7,229.7 0 0 0 3154.14,1487.58 Z" fill="#F7FBFF"/>
<path d="M3372.60,1176.60 A240.0,240.0 0 0 1 3566.76,1275.53 L3558.43,1281.59 A229.7,229.7 0 0 0 3372.60,1186.90 Z" fill="#6BAED6"/>
<path d="M3566.76,1275.53 A240.0,240.0 0 0 1 3600.85,1490.76 L3591.06,1487.58 A229.7,229.7 0 0 0 3558.43,1281.59 Z" fill="#08306B"/>
<path d="M3112.20,1501.21 A273.8,273.8 0 0 1 3628.42,1319.01 L3594.04,1332.13 A237.0,237.0 0 0 0 3147.20,1489.84 Z" fill="#08306B"/>
<path d="M3628.42,1319.01 A273.8,273.8 0 0 1 3633.00,1501.21 L3598.00,1489.84 A237.0,237.0 0 0 0 3594.04,1332.13 Z" fill="#E0E0E5"/>
<line x1="3153.19" y1="1487.89" x2="3172.88" y2="1481.49" stroke="#F7FBFF" stroke-width="4.8"/>
<line x1="3142.36" y1="1402.11" x2="3163.01" y2="1403.41" stroke="#F7FBFF" stroke-width="4.8"/>
<line x1="3163.86" y1="1318.37" x2="3182.59" y2="1327.19" stroke="#F7FBFF" stroke-width="4.8"/>
<line x1="3214.67" y1="1248.43" x2="3228.85" y2="1263.52" stroke="#F7FBFF" stroke-width="4.8"/>
<line x1="3287.67" y1="1202.10" x2="3295.29" y2="1221.35" stroke="#F7FBFF" stroke-width="4.8"/>
<line x1="3372.60" y1="1185.90" x2="3372.60" y2="1206.60" stroke="#6BAED6" stroke-width="4.8"/>
<line x1="3457.53" y1="1202.10" x2="3449.91" y2="1221.35" stroke="#6BAED6" stroke-width="4.8"/>
<line x1="3530.53" y1="1248.43" x2="3516.35" y2="1263.52" stroke="#6BAED6" stroke-width="4.8"/>
<line x1="3581.34" y1="1318.37" x2="3562.61" y2="1327.19" stroke="#08306B" stroke-width="4.8"/>
<line x1="3602.84" y1="1402.11" x2="3582.19" y2="1403.41" stroke="#08306B" stroke-width="4.8"/>
<line x1="3592.01" y1="1487.89" x2="3572.32" y2="1481.49" stroke="#08306B" stroke-width="4.8"/>
<text x="3252.9" y="1354.1" font-size="42.2" fill="#69707D" textLength="236.9" lengthAdjust="spacingAndGlyphs">Pin requests</text>
<text x="3290.9" y="1432.2" font-size="83.9" fill="#69707D" textLength="160.8" lengthAdjust="spacingAndGlyphs">82%</text>
<text x="2323.1" y="605.4" font-size="42.2" fill="#999999" textLength="110.0" lengthAdjust="spacingAndGlyphs">TEMP</text>
<text x="2997.4" y="609.8" font-size="42.2" fill="#505050" textLength="125.5" lengthAdjust="spacingAndGlyphs">7.813%</text>
<text x="2321.1" y="665.0" font-size="42.2" fill="#999999" textLength="130.3" lengthAdjust="spacingAndGlyphs">USERS</text>
<text x="3067.9" y="669.4" font-size="42.2" fill="#505050" textLength="55.0" lengthAdjust="spacingAndGlyphs">0%</text>
<text x="2321.0" y="724.6" font-size="42.2" fill="#999999" textLength="212.5" lengthAdjust="spacingAndGlyphs">UNDOTBS1</text>
<text x="3067.9" y="729.0" font-size="42.2" fill="#505050" textLength="55.0" lengthAdjust="spacingAndGlyphs">0%</text>
<text x="2322.2" y="784.2" font-size="42.2" fill="#999999" textLength="164.2" lengthAdjust="spacingAndGlyphs">SYSTEM</text>
<text x="3067.9" y="788.6" font-size="42.2" fill="#505050" textLength="55.0" lengthAdjust="spacingAndGlyphs">0%</text>
<text x="2322.2" y="843.8" font-size="42.2" fill="#999999" textLength="159.1" lengthAdjust="spacingAndGlyphs">SYSAUX</text>
<text x="3067.9" y="848.2" font-size="42.2" fill="#505050" textLength="55.0" lengthAdjust="spacingAndGlyphs">0%</text>
<rect x="2564" y="571.8" width="393.6" height="39.9" fill="#68BC00"/>
<text x="139.4" y="182.8" font-size="36.9" fill="#006BB4" textLength="181.9" lengthAdjust="spacingAndGlyphs">Full screen</text>
<text x="360.9" y="182.8" font-size="36.9" fill="#006BB4" textLength="97.5" lengthAdjust="spacingAndGlyphs">Share</text>
<text x="497.3" y="182.8" font-size="36.9" fill="#006BB4" textLength="98.6" lengthAdjust="spacingAndGlyphs">Clone</text>
<text x="632.8" y="182.8" font-size="36.9" fill="#006BB4" textLength="65.9" lengthAdjust="spacingAndGlyphs">Edit</text>
<rect x="141.25" y="228.25" width="2132.2" height="97.5" fill="#FBFCFD" stroke="#DFE2E6" stroke-width="2.5"/>
<rect x="142.5" y="229.5" width="147.5" height="95" fill="#F5F7FA"/>
<rect x="289.5" y="229.5" width="2.5" height="95" fill="#DFE2E6"/>
<text x="161.7" y="289.0" font-size="36.5" fill="#343741" font-weight="bold" textLength="108.8" lengthAdjust="spacingAndGlyphs">Filters</text>
<text x="322.4" y="289.0" font-size="36.9" fill="#69707D" textLength="115.0" lengthAdjust="spacingAndGlyphs">Search</text>
<text x="2182.2" y="289.0" font-size="36.9" fill="#006BB4" textLength="67.7" lengthAdjust="spacingAndGlyphs">KQL</text>
<rect x="2296.5" y="228.25" width="1157" height="97.5" fill="#FBFCFD" stroke="#DFE2E6" stroke-width="2.5"/>
<rect x="2427.2" y="229.5" width="2.5" height="95" fill="#DFE2E6"/>
<g fill="none" stroke="#006BB4" stroke-width="2.6"><rect x="2321.8" y="261" width="32.4" height="32.8" rx="4"/><line x1="2321.8" y1="268.5" x2="2354.2" y2="268.5"/><line x1="2332" y1="257.5" x2="2332" y2="264"/><line x1="2344" y1="257.5" x2="2344" y2="264"/></g>
<g fill="#006BB4"><rect x="2327.5" y="275.5" width="4.6" height="2.6"/><rect x="2335.1" y="275.5" width="4.6" height="2.6"/><rect x="2342.7" y="275.5" width="4.6" height="2.6"/><rect x="2327.5" y="280.5" width="4.6" height="2.6"/><rect x="2335.1" y="280.5" width="4.6" height="2.6"/><rect x="2342.7" y="280.5" width="4.6" height="2.6"/><rect x="2327.5" y="285.5" width="4.6" height="2.6"/><rect x="2335.1" y="285.5" width="4.6" height="2.6"/><rect x="2342.7" y="285.5" width="4.6" height="2.6"/></g>
<polyline points="2373.5,270 2388,283.5 2402.5,270" fill="none" stroke="#006BB4" stroke-width="2.8"/>
<text x="2454.3" y="289.2" font-size="37.2" fill="#343741" textLength="434.1" lengthAdjust="spacingAndGlyphs">Oct 11, 2019 @ 12:08:07.73</text>
<g fill="none" stroke="#69707D" stroke-width="2.4"><line x1="2929" y1="278" x2="2954" y2="278"/><polyline points="2942,266 2954,278 2942,290"/></g>
<text x="2994.3" y="289.2" font-size="37.2" fill="#343741" textLength="432.4" lengthAdjust="spacingAndGlyphs">Oct 11, 2019 @ 12:45:56.13</text>
<rect x="3495" y="227" width="295" height="100" rx="10" fill="#006BB4"/>
<path d="M3568,265.9 A14,14 0 1 0 3573.7,276.6" fill="none" stroke="#FFFFFF" stroke-width="2.4" stroke-linecap="round"/>
<path d="M3573.6,260.2 L3573.6,268 Q3573.6,270.5 3571,270.5 L3563,270.5" fill="none" stroke="#FFFFFF" stroke-width="2.4" stroke-linecap="round"/>
<text x="3599.6" y="290.2" font-size="42.4" fill="#FFFFFF" textLength="145.1" lengthAdjust="spacingAndGlyphs">Refresh</text>
<rect x="169.8" y="326" width="2.5" height="25" fill="#D3DAE6"/>
<rect x="205" y="384" width="24" height="2.5" fill="#D3DAE6"/>
<text x="253.8" y="394.0" font-size="36.9" fill="#006BB4" textLength="181.2" lengthAdjust="spacingAndGlyphs">+ Add filter</text>
<rect x="120" y="437.3" width="3690" height="2.5" fill="#D3DAE6"/>
<polygon points="165.9,368 174,368 176,374.6 184.1,373.8 188.2,380.8 184.1,386.8 188.2,392.9 184.1,399.7 176,399.1 174,405.9 165.9,405.9 163.6,399.1 155.3,399.7 151.4,392.9 155.9,386.8 151.4,380.8 155.3,373.8 163.6,374.6" fill="none" stroke="#343741" stroke-width="2.4" stroke-linejoin="round"/>
<circle cx="169.9" cy="386.8" r="6.2" fill="none" stroke="#343741" stroke-width="2.4"/>
<rect x="120" y="122.5" width="11" height="2037.5" fill="url(#gshL)"/>
<rect x="0" y="122.5" width="120.2" height="2037.5" fill="#FFFFFF"/>
<rect x="0" y="244" width="120" height="2.5" fill="#D3DAE6"/>
<rect x="20.3" y="467" width="79.7" height="80" rx="12" fill="#F5F7FA"/>
<rect x="0" y="2043" width="120.2" height="14.5" fill="url(#gshB)"/>
<g fill="none" stroke="#343741" stroke-width="2.8" stroke-linecap="round"><line x1="43.5" y1="2097.8" x2="61.8" y2="2097.8"/><line x1="43.5" y1="2108" x2="76" y2="2108"/><line x1="43.5" y1="2117.8" x2="61.8" y2="2117.8"/><polyline points="69.3,2100.8 76.5,2108 69.3,2115.2"/></g>
<g fill="none" stroke="#343741" stroke-width="2.3" ><circle cx="58.65" cy="182.65" r="15"/><polyline points="58.65,172.5 58.65,182.5 66.3,182.5" stroke-linecap="round" stroke-linejoin="round"/></g>
<g fill="none" stroke="#343741" stroke-width="2.3" ><circle cx="60" cy="306.8" r="18.8"/><line x1="60" y1="288" x2="60" y2="291.5"/><line x1="60" y1="322.1" x2="60" y2="325.6"/><line x1="41.2" y1="306.8" x2="44.7" y2="306.8"/><line x1="75.3" y1="306.8" x2="78.8" y2="306.8"/></g>
<g fill="none" stroke="#017D73" stroke-width="2.2" ><polygon points="69.3,297.5 55.8,303.3 50.5,316.3 64,310.5" stroke-linejoin="miter"/></g>
<g fill="none" stroke="#017D73" stroke-width="2.6" ><path d="M41.3,386.9 L41.3,421.5 Q41.3,425.4 45.2,425.4 L79.9,425.4"/></g>
<g fill="none" stroke="#343741" stroke-width="2.3" ><circle cx="48.7" cy="402" r="2.6"/><circle cx="61.1" cy="391.9" r="2.6"/><circle cx="73.8" cy="398.2" r="2.6"/><line x1="50.7" y1="400.4" x2="59.1" y2="393.5"/><line x1="63.4" y1="393.1" x2="71.5" y2="397"/><line x1="48.7" y1="412.2" x2="48.7" y2="420.7"/><line x1="61.1" y1="402" x2="61.1" y2="420.7"/><line x1="73.8" y1="408" x2="73.8" y2="420.7"/></g>
<g fill="none" stroke="#343741" stroke-width="2.5" ><rect x="41.4" y="488.4" width="37.2" height="8.2" rx="3"/><rect x="41.4" y="515.8" width="15.9" height="8.4" rx="3"/></g>
<g fill="none" stroke="#017D73" stroke-width="2.5" ><rect x="41.4" y="502" width="15.9" height="8.5" rx="3"/><rect x="62.6" y="502" width="16" height="22.2" rx="3"/></g>
<g fill="none" stroke="#343741" stroke-width="2.4" ><path d="M42.30,596.80 L42.74,596.83 L43.18,596.91 L43.63,597.04 L44.07,597.21 L44.51,597.42 L44.95,597.64 L45.40,597.88 L45.84,598.11 L46.28,598.32 L46.72,598.51 L47.17,598.65 L47.61,598.75 L48.05,598.80 L48.49,598.79 L48.94,598.72 L49.38,598.61 L49.82,598.45 L50.27,598.25 L50.71,598.03 L51.15,597.80 L51.59,597.57 L52.03,597.35 L52.48,597.15 L52.92,596.99 L53.36,596.88 L53.80,596.81 L54.25,596.80 L54.69,596.85 L55.13,596.95 L55.58,597.09 L56.02,597.28 L56.46,597.49 L56.90,597.72 L57.34,597.96 L57.79,598.18 L58.23,598.39 L58.67,598.56 L59.11,598.69 L59.56,598.77 L60.00,598.80 L60.44,598.77 L60.89,598.69 L61.33,598.56 L61.77,598.39 L62.21,598.18 L62.66,597.96 L63.10,597.72 L63.54,597.49 L63.98,597.28 L64.42,597.09 L64.87,596.95 L65.31,596.85 L65.75,596.80 L66.20,596.81 L66.64,596.88 L67.08,596.99 L67.52,597.15 L67.97,597.35 L68.41,597.57 L68.85,597.80 L69.29,598.03 L69.73,598.25 L70.18,598.45 L70.62,598.61 L71.06,598.72 L71.50,598.79 L71.95,598.80 L72.39,598.75 L72.83,598.65 L73.28,598.51 L73.72,598.32 L74.16,598.11 L74.60,597.88 L75.05,597.64 L75.49,597.42 L75.93,597.21 L76.37,597.04 L76.81,596.91 L77.26,596.83 L77.70,596.80 L77.69,597.15 L77.66,597.50 L77.61,597.84 L77.55,598.19 L77.47,598.54 L77.37,598.88 L77.26,599.23 L77.15,599.58 L77.03,599.93 L76.90,600.27 L76.77,600.62 L76.65,600.97 L76.54,601.32 L76.43,601.66 L76.33,602.01 L76.25,602.36 L76.19,602.71 L76.14,603.05 L76.11,603.40 L76.10,603.75 L76.11,604.10 L76.14,604.44 L76.19,604.79 L76.25,605.14 L76.33,605.49 L76.43,605.83 L76.54,606.18 L76.65,606.53 L76.77,606.88 L76.90,607.23 L77.03,607.57 L77.15,607.92 L77.26,608.27 L77.37,608.62 L77.47,608.96 L77.55,609.31 L77.61,609.66 L77.66,610.00 L77.69,610.35 L77.70,610.70 L77.69,611.05 L77.66,611.39 L77.61,611.74 L77.55,612.09 L77.47,612.44 L77.37,612.78 L77.26,613.13 L77.15,613.48 L77.03,613.83 L76.90,614.17 L76.77,614.52 L76.65,614.87 L76.54,615.22 L76.43,615.57 L76.33,615.91 L76.25,616.26 L76.19,616.61 L76.14,616.96 L76.11,617.30 L76.10,617.65 L76.11,618.00 L76.14,618.35 L76.19,618.69 L76.25,619.04 L76.33,619.39 L76.43,619.74 L76.54,620.08 L76.65,620.43 L76.77,620.78 L76.90,621.12 L77.03,621.47 L77.15,621.82 L77.26,622.17 L77.37,622.51 L77.47,622.86 L77.55,623.21 L77.61,623.56 L77.66,623.90 L77.69,624.25 L77.70,624.60 L77.26,624.57 L76.81,624.49 L76.37,624.36 L75.93,624.19 L75.49,623.98 L75.05,623.76 L74.60,623.52 L74.16,623.29 L73.72,623.08 L73.28,622.89 L72.83,622.75 L72.39,622.65 L71.95,622.60 L71.50,622.61 L71.06,622.68 L70.62,622.79 L70.18,622.95 L69.73,623.15 L69.29,623.37 L68.85,623.60 L68.41,623.83 L67.97,624.05 L67.52,624.25 L67.08,624.41 L66.64,624.52 L66.19,624.59 L65.75,624.60 L65.31,624.55 L64.87,624.45 L64.42,624.31 L63.98,624.12 L63.54,623.91 L63.10,623.68 L62.66,623.44 L62.21,623.22 L61.77,623.01 L61.33,622.84 L60.89,622.71 L60.44,622.63 L60.00,622.60 L59.56,622.63 L59.11,622.71 L58.67,622.84 L58.23,623.01 L57.79,623.22 L57.34,623.44 L56.90,623.68 L56.46,623.91 L56.02,624.12 L55.58,624.31 L55.13,624.45 L54.69,624.55 L54.25,624.60 L53.80,624.59 L53.36,624.52 L52.92,624.41 L52.48,624.25 L52.03,624.05 L51.59,623.83 L51.15,623.60 L50.71,623.37 L50.27,623.15 L49.82,622.95 L49.38,622.79 L48.94,622.68 L48.50,622.61 L48.05,622.60 L47.61,622.65 L47.17,622.75 L46.72,622.89 L46.28,623.08 L45.84,623.29 L45.40,623.52 L44.95,623.76 L44.51,623.98 L44.07,624.19 L43.63,624.36 L43.18,624.49 L42.74,624.57 L42.30,624.60 L42.31,624.25 L42.34,623.90 L42.39,623.56 L42.45,623.21 L42.53,622.86 L42.63,622.51 L42.74,622.17 L42.85,621.82 L42.97,621.47 L43.10,621.12 L43.23,620.78 L43.35,620.43 L43.46,620.08 L43.57,619.74 L43.67,619.39 L43.75,619.04 L43.81,618.69 L43.86,618.35 L43.89,618.00 L43.90,617.65 L43.89,617.30 L43.86,616.96 L43.81,616.61 L43.75,616.26 L43.67,615.91 L43.57,615.57 L43.46,615.22 L43.35,614.87 L43.23,614.52 L43.10,614.17 L42.97,613.83 L42.85,613.48 L42.74,613.13 L42.63,612.78 L42.53,612.44 L42.45,612.09 L42.39,611.74 L42.34,611.39 L42.31,611.05 L42.30,610.70 L42.31,610.35 L42.34,610.00 L42.39,609.66 L42.45,609.31 L42.53,608.96 L42.63,608.62 L42.74,608.27 L42.85,607.92 L42.97,607.57 L43.10,607.23 L43.23,606.88 L43.35,606.53 L43.46,606.18 L43.57,605.83 L43.67,605.49 L43.75,605.14 L43.81,604.79 L43.86,604.44 L43.89,604.10 L43.90,603.75 L43.89,603.40 L43.86,603.05 L43.81,602.71 L43.75,602.36 L43.67,602.01 L43.57,601.66 L43.46,601.32 L43.35,600.97 L43.23,600.62 L43.10,600.27 L42.97,599.93 L42.85,599.58 L42.74,599.23 L42.63,598.88 L42.53,598.54 L42.45,598.19 L42.39,597.84 L42.34,597.50 L42.31,597.15 Z" stroke-linejoin="round"/><polyline points="49.5,597.5 60,588.6 70.5,597.5" stroke-linejoin="miter"/></g>
<g fill="none" stroke="#017D73" stroke-width="2.6" ><line x1="50.1" y1="608.5" x2="50.1" y2="616.8"/><line x1="56.3" y1="604.9" x2="56.3" y2="616.8"/><line x1="62.6" y1="607.3" x2="62.6" y2="616.8"/><line x1="67.3" y1="605.6" x2="71.2" y2="605.6"/><line x1="67.3" y1="610.8" x2="71.2" y2="610.8"/><line x1="67.3" y1="615.8" x2="71.2" y2="615.8"/></g>
<g fill="none" stroke="#343741" stroke-width="2.3" ><path d="M60,714 L51.5,703.5 A10.4,10.4 0 1 1 68.5,703.5 Z" stroke-linejoin="round"/><circle cx="60" cy="698.1" r="3.6"/></g>
<g fill="none" stroke="#017D73" stroke-width="2.6" ><polyline points="50.3,708.7 42.6,712.2 60,719.6 77.4,712.2 69.7,708.7"/><polyline points="42.6,717.8 60,725.3 77.4,717.8"/></g>
<g fill="none" stroke="#343741" stroke-width="2.4" ><path d="M51.5,797.5 L48.6,789 C62,789.5 71,796 73.6,808.5 L77.4,825"/><polyline points="49.8,809.4 42,824.6 54.4,824.6"/></g>
<g fill="none" stroke="#017D73" stroke-width="2.4" ><path d="M53.3,803.3 C62,803.5 67.5,810 70,816 L72,824.2 L59.8,824.2 Z" stroke-linejoin="miter"/></g>
<g fill="none" stroke="#343741" stroke-width="2.1" ><circle cx="53.7" cy="890.6" r="2.7"/><circle cx="53.7" cy="903.1" r="2.7"/><circle cx="53.7" cy="923.2" r="2.7"/><circle cx="66.1" cy="890.6" r="2.7"/><circle cx="66.1" cy="903.1" r="2.7"/><circle cx="66.1" cy="923.2" r="2.7"/></g>
<g fill="none" stroke="#017D73" stroke-width="2.5" ><polyline points="47.2,894.8 42.5,898.4 42.5,915 47.2,918.8"/><path d="M42.5,915 L51.2,912.3 Q53.9,911.2 54,909.8"/><polyline points="72.8,894.8 77.5,898.4 77.5,915 72.8,918.8"/><path d="M77.5,915 L68.8,912.3 Q66.1,911.2 66,909.8"/></g>
<g fill="none" stroke="#343741" stroke-width="2.4" ><rect x="52.3" y="1006.2" width="25.4" height="19.6"/><line x1="52.3" y1="1015.9" x2="77.7" y2="1015.9"/><path d="M47.5,1016.8 C42,1014.5 40.6,1009.5 41.5,1005.5 C42.5,1001.5 45,999.5 47.8,998.8 C48.5,992.5 53,989 58.2,989 C63.5,989 67.5,993 68,998.8 C70.5,999.5 72.5,1001 73.3,1002.6"/></g>
<g fill="none" stroke="#017D73" stroke-width="2.5" ><line x1="56.3" y1="1011.2" x2="60.5" y2="1011.2" stroke-linecap="round"/><line x1="56.3" y1="1020.9" x2="60.5" y2="1020.9" stroke-linecap="round"/></g>
<g fill="none" stroke="#343741" stroke-width="2.4" ><path d="M46.4,1117.8 L46.4,1093.5 Q46.4,1089.4 50.5,1089.4 L75,1089.4 A3.5,3.5 0 0 1 78.5,1093 L78.5,1095.6 L71.4,1095.6 M75,1089.4 A3.6,3.6 0 0 0 71.4,1093 L71.4,1119.5 A4.6,4.6 0 0 1 62.6,1121.6 L62.6,1117.8 L41,1117.8 L41,1120 Q41,1124.2 45.5,1124.2 L67.6,1124.2" stroke-linejoin="miter"/></g>
<g fill="none" stroke="#017D73" stroke-width="2.6" ><line x1="51.3" y1="1098.3" x2="66" y2="1098.3"/><line x1="51.3" y1="1104.5" x2="66" y2="1104.5"/><line x1="51.3" y1="1110.5" x2="66" y2="1110.5"/></g>
<g fill="none" stroke="#343741" stroke-width="2.5" ><polyline points="48.4,1200.6 42.4,1200.6 42.4,1189.4 77.4,1189.4 77.4,1195.4"/><polyline points="63.7,1216.1 63.7,1224.2 77.4,1224.2 77.4,1216.1"/></g>
<g fill="none" stroke="#017D73" stroke-width="2.5" ><path d="M52.6,1200.6 L77.4,1200.6 C77,1207 72,1211.6 66,1211.6 L52.6,1211.6 Z" stroke-linejoin="miter"/></g>
<g fill="none" stroke="#343741" stroke-width="2.4" ><path d="M41.3,1313.3 A15,15 0 0 0 71.2,1310.7 L71.2,1289.8"/><polyline points="64,1296.9 71.2,1289.8 78.2,1296.6"/><polyline points="49.9,1310.7 55,1315.2 63.3,1305.8"/></g>
<g fill="none" stroke="#017D73" stroke-width="2.4" ><path d="M41.7,1307.6 A15,15 0 0 1 44.5,1301.2"/><path d="M47.8,1297.6 A15,15 0 0 1 55.8,1295.7"/></g>
<g fill="none" stroke="#343741" stroke-width="2.4" ><path d="M51.3,1401.6 L51.3,1396.7 A8.7,8.7 0 0 1 68.7,1396.7 L68.7,1401.6"/><path d="M43.7,1405.6 L76.4,1405.6 L76.4,1423.4 Q60,1428 43.7,1423.4 Z" stroke-linejoin="miter"/></g>
<g fill="none" stroke="#017D73" stroke-width="2.6" ><line x1="51.3" y1="1409.7" x2="51.3" y2="1416.5"/><line x1="60" y1="1409.7" x2="60" y2="1419"/><line x1="68.7" y1="1409.7" x2="68.7" y2="1416.5"/></g>
<g fill="none" stroke="#343741" stroke-width="2.2" ><circle cx="49.9" cy="1506.8" r="4"/><line x1="53.9" y1="1506.8" x2="61.9" y2="1506.8"/><line x1="52" y1="1503.3" x2="55.3" y2="1498.5"/><line x1="52" y1="1510.3" x2="55.3" y2="1515.1"/></g>
<g fill="none" stroke="#017D73" stroke-width="2.2" ><circle cx="59.7" cy="1492.4" r="4"/><circle cx="70" cy="1506.8" r="4"/><circle cx="59.7" cy="1521.4" r="4"/></g>
<g fill="none" stroke="#343741" stroke-width="2.3" ><path d="M54.8,1621.5 L54.8,1611.8 A12.6,12.6 0 0 1 54.8,1589 L54.8,1599.6 L65,1599.6 L65,1589 A12.6,12.6 0 0 1 65,1611.8 L65,1621.5" stroke-linejoin="miter"/></g>
<g fill="none" stroke="#017D73" stroke-width="2.6" ><line x1="54" y1="1625.7" x2="66" y2="1625.7"/></g>
<g fill="none" stroke="#343741" stroke-width="2.4" ><path d="M42.8,1704.5 C38,1697 42,1689 51.3,1688.8 C55,1688.8 58,1691 60,1694.2 C62,1691 65,1688.8 68.5,1688.8 C78,1689 82,1697 77.3,1703.8"/><polyline points="51.3,1714.7 60,1723.8 68.5,1714.7"/></g>
<g fill="none" stroke="#017D73" stroke-width="2.6" ><polyline points="40.4,1709.5 52.6,1709.5 54.8,1703.3 60,1714.2 65,1699.2 68.5,1709.5 79.6,1709.5" stroke-linejoin="miter"/></g>
<g fill="none" stroke="#343741" stroke-width="2.4" ><path d="M56.00,1793.50 L56.00,1787.90 L64.00,1787.90 L64.00,1793.50 Q63.87,1797.47 66.58,1794.57 L70.54,1790.61 L76.19,1796.26 L72.23,1800.22 Q69.33,1802.93 73.30,1802.80 L78.90,1802.80 L78.90,1810.80 L73.30,1810.80 Q69.33,1810.67 72.23,1813.38 L76.19,1817.34 L70.54,1822.99 L66.58,1819.03 Q63.87,1816.13 64.00,1820.10 L64.00,1825.70 L56.00,1825.70 L56.00,1820.10 Q56.13,1816.13 53.42,1819.03 L49.46,1822.99 L43.81,1817.34 L47.77,1813.38 Q50.67,1810.67 46.70,1810.80 L41.10,1810.80 L41.10,1802.80 L46.70,1802.80 Q50.67,1802.93 47.77,1800.22 L43.81,1796.26 L49.46,1790.61 L53.42,1794.57 Q56.13,1797.47 56.00,1793.50 Z" stroke-linejoin="miter"/></g>
<g fill="none" stroke="#017D73" stroke-width="2.2" ><circle cx="60" cy="1806.8" r="5"/></g>
<rect x="120.2" y="122.5" width="3690" height="14" fill="url(#gshT)"/>
<rect x="0" y="0" width="3810" height="120" fill="#FFFFFF"/>
<rect x="0" y="120" width="3810" height="2.5" fill="#D3DAE6"/>
<path d="M37.3,27.1 L84,27.1 L59.8,55.2 Q50,49.6 37.3,49.5 Z" fill="#F04E98"/>
<path d="M37.3,49.5 Q50,49.6 59.8,55.2 L37.3,80.8 Z" fill="#343741"/>
<path d="M40,86.8 L64.6,58.1 Q80.5,68.5 83.3,86.8 Z" fill="#00BFB3"/>
<rect x="120" y="40" width="2.5" height="80" fill="#D3DAE6"/>
<rect x="240" y="40" width="2.5" height="80" fill="#D3DAE6"/>
<rect x="3690.5" y="40" width="2.5" height="80" fill="#D3DAE6"/>
<rect x="153" y="30" width="60" height="60" rx="9.5" fill="#00BFB3"/>
<text x="183.0" y="70.5" font-size="31.3" fill="#000000" text-anchor="middle" textLength="20.0" lengthAdjust="spacingAndGlyphs">D</text>
<text x="282.0" y="72.2" font-size="37.2" fill="#69707D" textLength="180.4" lengthAdjust="spacingAndGlyphs">Dashboard</text>
<line x1="487.2" y1="41" x2="477" y2="79" stroke="#D3DAE6" stroke-width="3"/>
<text x="504.6" y="72.2" font-size="37.2" fill="#343741" textLength="490.0" lengthAdjust="spacingAndGlyphs">[Metricbeat Oracle] Overview</text>
<g fill="none" stroke="#343741" stroke-width="2.2"><circle cx="3749.9" cy="59.8" r="18.8"/><circle cx="3749.9" cy="59.8" r="11"/></g>
<g stroke="#343741" stroke-width="5.8"><line x1="3758.03" y1="67.93" x2="3762.98" y2="72.88"/><line x1="3741.77" y1="67.93" x2="3736.82" y2="72.88"/><line x1="3741.77" y1="51.67" x2="3736.82" y2="46.72"/><line x1="3758.03" y1="51.67" x2="3762.98" y2="46.72"/></g>
<rect x="3810" y="0" width="30" height="2160" fill="#F1F1F1"/>
<rect x="3812" y="30" width="26" height="1166" fill="#C1C1C1"/>
<polygon points="3818,19 3832,19 3825,12" fill="#A3A3A3"/>
<polygon points="3818,2141 3832,2141 3825,2148" fill="#505050"/>
</svg>
</body></html>
